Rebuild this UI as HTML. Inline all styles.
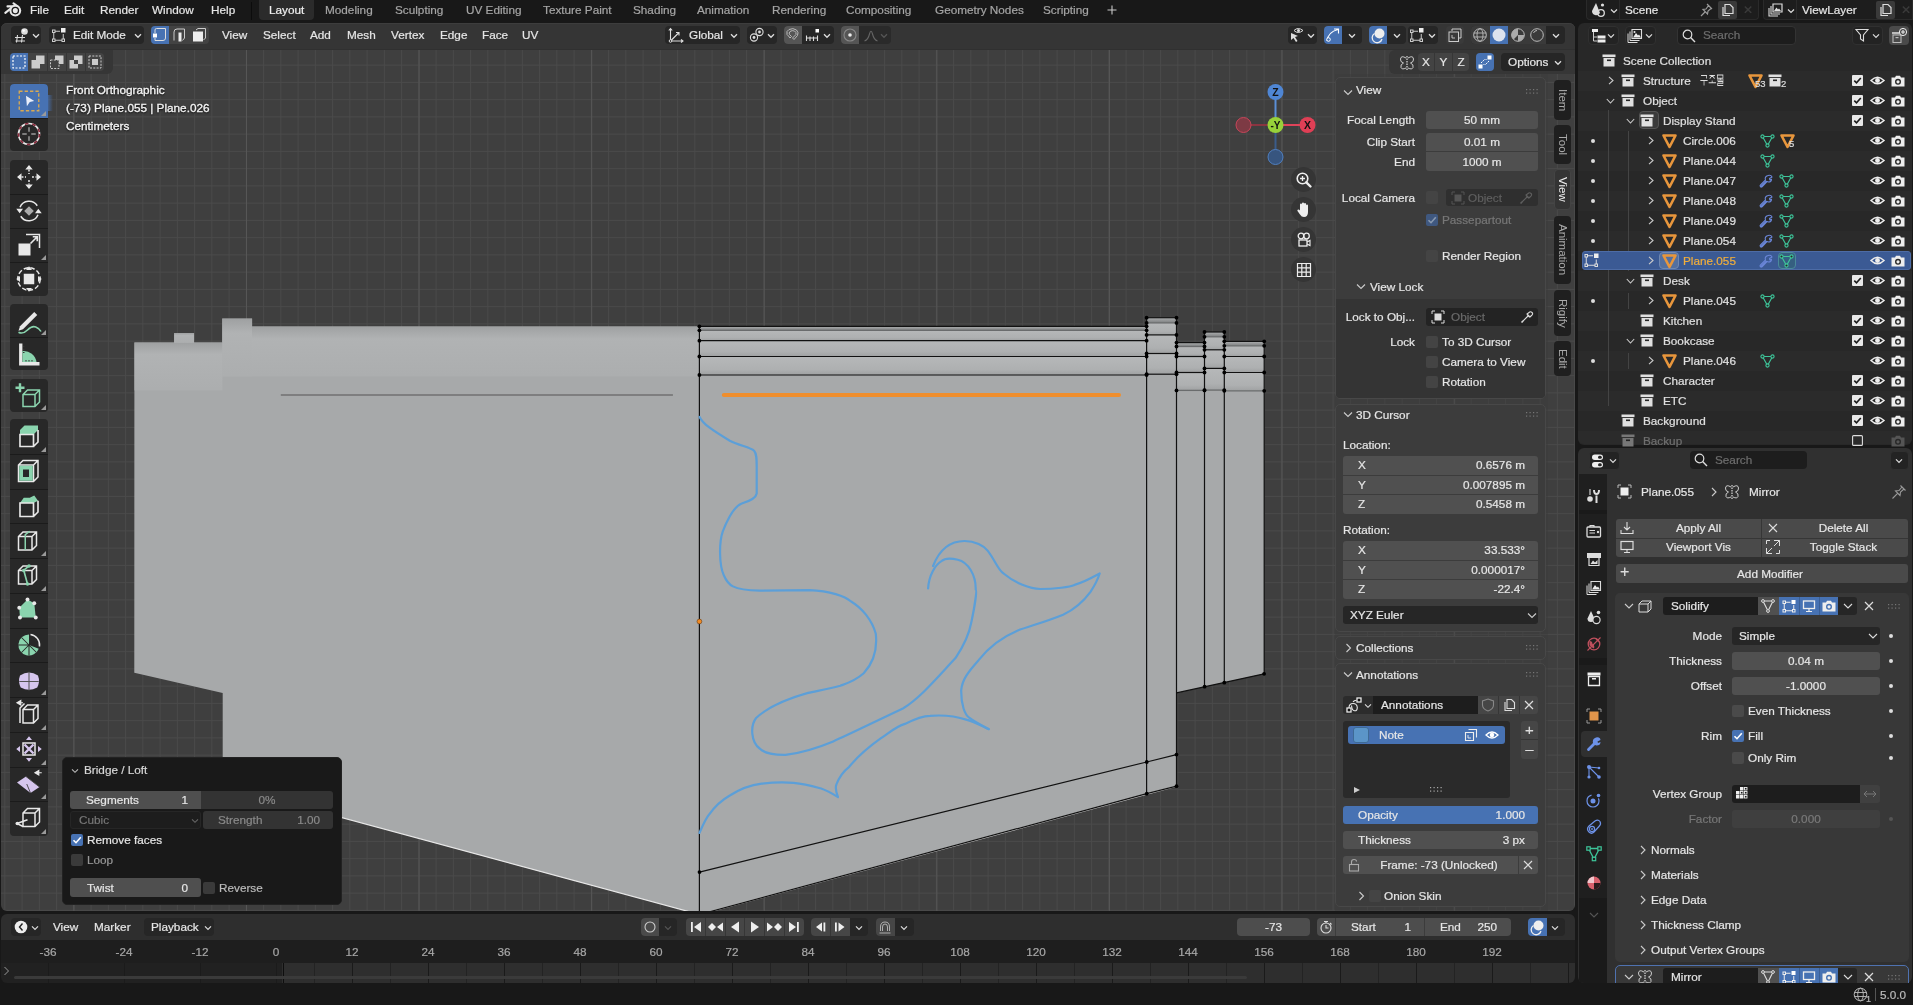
<!DOCTYPE html>
<html><head><meta charset="utf-8">
<style>
*{box-sizing:border-box;margin:0;padding:0}
html,body{width:1913px;height:1005px;overflow:hidden;background:#181818;font-family:"Liberation Sans",sans-serif;font-size:11.75px;color:#e6e6e6}
.a{position:absolute}
.t{position:absolute;white-space:nowrap;line-height:14px;font-size:11.75px;color:#e6e6e6;-webkit-text-stroke:0.2px currentColor;will-change:transform}
.r{text-align:right}
.c{text-align:center}
.dim{color:#8a8a8a}
.num{position:absolute;background:#545454;border-radius:3px}
.tf{position:absolute;background:#1d1d1d;border-radius:3px}
.mn{position:absolute;background:#282828;border-radius:3px}
.chk{position:absolute;width:12px;height:12px;background:#545454;border-radius:2px}
.chk.on{background:#4772b3}
.blue{background:#4772b3}
svg{position:absolute;overflow:visible}
</style></head><body>

<!-- TOP BAR -->
<div class="a" style="left:0;top:0;width:1913px;height:23px;background:#181818"></div>
<svg width="30" height="22" style="left:0;top:0" viewBox="0 0 30 22">
<g stroke="#e8e8e8" stroke-width="2.1" stroke-linecap="round" fill="none"><path d="M5.3 12.9 L11 8.2 M7.5 6.4 L15.5 6.1 M13.5 3.4 L18 6.5"/></g>
<circle cx="15.3" cy="10.6" r="5.9" fill="#e8e8e8"/>
<circle cx="15.3" cy="10.6" r="3.2" fill="none" stroke="#181818" stroke-width="1.3"/>
<circle cx="15.3" cy="10.6" r="1.7" fill="#e8e8e8"/>
</svg>
<div class="t" style="left:30px;top:3px">File</div>
<div class="t" style="left:64px;top:3px">Edit</div>
<div class="t" style="left:100px;top:3px">Render</div>
<div class="t" style="left:152px;top:3px">Window</div>
<div class="t" style="left:211px;top:3px">Help</div>
<div class="a" style="left:251px;top:2px;width:1px;height:18px;background:#0c0c0c"></div>
<div class="a" style="left:259px;top:0;width:55px;height:20px;background:#2b2b2b;border-radius:0 0 4px 4px"></div>
<div class="t" style="left:269px;top:3px;color:#f0f0f0">Layout</div>
<div class="t" style="left:325px;top:3px;color:#a6a6a6">Modeling</div>
<div class="t" style="left:395px;top:3px;color:#a6a6a6">Sculpting</div>
<div class="t" style="left:466px;top:3px;color:#a6a6a6">UV Editing</div>
<div class="t" style="left:543px;top:3px;color:#a6a6a6">Texture Paint</div>
<div class="t" style="left:633px;top:3px;color:#a6a6a6">Shading</div>
<div class="t" style="left:697px;top:3px;color:#a6a6a6">Animation</div>
<div class="t" style="left:772px;top:3px;color:#a6a6a6">Rendering</div>
<div class="t" style="left:846px;top:3px;color:#a6a6a6">Compositing</div>
<div class="t" style="left:935px;top:3px;color:#a6a6a6">Geometry Nodes</div>
<div class="t" style="left:1043px;top:3px;color:#a6a6a6">Scripting</div>
<svg width="12" height="12" viewBox="0 0 12 12" style="left:1105.5px;top:3.5px"><path d="M6 1.5 V10.5 M1.5 6 H10.5" stroke="#c8c8c8" stroke-width="1.1"/></svg>
<!-- scene selector -->
<div class="a" style="left:1586px;top:0;width:173px;height:20px;background:#1d1d1d;border-radius:0 0 4px 4px;border:1px solid #2a2a2a;border-top:none"></div>
<svg width="20" height="16" style="left:1590px;top:2px" viewBox="0 0 20 16">
<path d="M6 1 L10 11 Q8 14 5 13 Q2 12 2 9 Z" fill="#ddd"/><circle cx="12.5" cy="3" r="1.6" fill="#ddd"/><circle cx="11" cy="11" r="3.3" fill="none" stroke="#ddd" stroke-width="1.3"/>
</svg>
<svg width="8" height="6" style="left:1610px;top:8px" viewBox="0 0 8 6"><path d="M1 1.5 L4 4.5 L7 1.5" fill="none" stroke="#ddd" stroke-width="1.2"/></svg>
<div class="a" style="left:1619px;top:0;width:1px;height:19px;background:#2a2a2a"></div>
<div class="t" style="left:1625px;top:3px">Scene</div>
<svg width="16" height="16" style="left:1698px;top:2px" viewBox="0 0 16 16"><path d="M9 2 L14 7 M10.5 3.5 L8 7 L5 7.5 L9.5 12 L10 9 L13 6.5 M7 10 L3 14" fill="none" stroke="#9a9a9a" stroke-width="1.2"/></svg>
<div class="a" style="left:1718px;top:1px;width:19px;height:18px;background:#3a3a3a;border-radius:2px"></div>
<svg width="14" height="14" style="left:1721px;top:3px" viewBox="0 0 14 14"><path d="M4 1.5 H9 L12 4.5 V10.5 H4 Z M2 4 V12.5 H9" fill="none" stroke="#ddd" stroke-width="1.2"/></svg>
<div class="t" style="left:1743px;top:3px;color:#3c3c3c">&#x2715;</div>
<!-- view layer selector -->
<div class="a" style="left:1763px;top:0;width:150px;height:20px;background:#1d1d1d;border-radius:0 0 0 4px;border:1px solid #2a2a2a;border-top:none"></div>
<svg width="16" height="16" style="left:1768px;top:2px" viewBox="0 0 16 16"><path d="M5 2 H14 V10 H5 Z" fill="none" stroke="#ddd" stroke-width="1.2"/><path d="M3 4 V12 H12 M1 6 V14 H10" fill="none" stroke="#ddd" stroke-width="1.1"/><path d="M6 9 L8.5 5.5 L10 7.5 L11 6.5 L13 9 Z" fill="#ddd"/></svg>
<svg width="8" height="6" style="left:1787px;top:8px" viewBox="0 0 8 6"><path d="M1 1.5 L4 4.5 L7 1.5" fill="none" stroke="#ddd" stroke-width="1.2"/></svg>
<div class="a" style="left:1796px;top:0;width:1px;height:19px;background:#2a2a2a"></div>
<div class="t" style="left:1802px;top:3px">ViewLayer</div>
<div class="a" style="left:1876px;top:1px;width:19px;height:18px;background:#3a3a3a;border-radius:2px"></div>
<svg width="14" height="14" style="left:1879px;top:3px" viewBox="0 0 14 14"><path d="M4 1.5 H9 L12 4.5 V10.5 H4 Z M2 4 V12.5 H9" fill="none" stroke="#ddd" stroke-width="1.2"/></svg>
<div class="t" style="left:1901px;top:3px;color:#3c3c3c">&#x2715;</div>

<!-- VIEWPORT AREA -->
<div id="vp" class="a" style="left:1px;top:23px;width:1574px;height:888px;border-radius:6px;overflow:hidden;background-color:#3f3f3f;
background-image:
linear-gradient(to right,#565656 1px,transparent 1px),
linear-gradient(to right,#4a4a4a 1px,transparent 1px),
linear-gradient(to bottom,#4a4a4a 1px,transparent 1px);
background-size:172.6px 100%,17.26px 100%,100% 17.26px;
background-position:72.4px 0,3.36px 0,0 7.16px"></div>



<!-- VIEWPORT HEADER -->
<div class="a" style="left:1px;top:23px;width:1574px;height:27px;background:#353535;border-radius:6px 6px 0 0;border-top:1px solid #3d3d3d;border-bottom:1px solid #303030"></div>
<div class="a" style="left:1px;top:50px;width:112px;height:24px;background:#363636;border-radius:0 0 6px 0"></div>
<div class="a" style="left:1389px;top:50px;width:186px;height:24px;background:#363636;border-radius:6px 0 0 6px"></div>
<!-- editor type -->
<div class="a" style="left:11px;top:26px;width:30px;height:18px;background:#262626;border-radius:4px"></div>
<svg width="16" height="16" style="left:14px;top:27px" viewBox="0 0 16 16"><path d="M1 10.5 H11 M1.5 14 H11 M3.5 8 L2.5 15.5 M8.5 8 L7.5 15.5" stroke="#ddd" stroke-width="1.1" fill="none"/><circle cx="10.5" cy="4.5" r="3.3" fill="#ddd"/><circle cx="9.6" cy="3.6" r="1.2" fill="#fff"/></svg>
<svg width="8" height="6" style="left:32px;top:33px" viewBox="0 0 8 6"><path d="M1 1.3 L4 4.3 L7 1.3" fill="none" stroke="#ddd" stroke-width="1.3"/></svg>
<!-- edit mode -->
<div class="a" style="left:49px;top:26px;width:95px;height:18px;background:#262626;border-radius:4px"></div>
<svg width="16" height="16" style="left:51px;top:27px" viewBox="0 0 16 16"><g fill="none" stroke="#ccc" stroke-width="1"><rect x="1.5" y="3" width="2.5" height="2.5"/><rect x="1.5" y="12" width="2.5" height="2.5"/><rect x="11" y="12" width="2.5" height="2.5"/><path d="M2.75 5.5 V12 M4 13.25 H11 M4 4.25 H9 M12.25 7 V12"/></g><rect x="10" y="1" width="4.5" height="4.5" fill="#eee"/></svg>
<div class="t" style="left:73px;top:28px">Edit Mode</div>
<svg width="8" height="6" style="left:134px;top:33px" viewBox="0 0 8 6"><path d="M1 1.3 L4 4.3 L7 1.3" fill="none" stroke="#ddd" stroke-width="1.3"/></svg>
<!-- select modes -->
<div class="a blue" style="left:151px;top:26px;width:18px;height:18px;border-radius:4px 0 0 4px"></div>
<div class="a" style="left:169px;top:26px;width:20px;height:18px;background:#434343"></div>
<div class="a" style="left:189px;top:26px;width:20px;height:18px;background:#434343;border-radius:0 4px 4px 0"></div>
<svg width="16" height="16" style="left:152px;top:27px" viewBox="0 0 16 16"><path d="M3 6 V3 Q3 1.5 4.5 1.5 H13.5 V11 Q13.5 13.5 11 13.5 H3 V11" fill="none" stroke="#ddd" stroke-width="1"/><rect x="1" y="6.5" width="4" height="4" fill="#fff"/></svg>
<svg width="16" height="16" style="left:171px;top:27px" viewBox="0 0 16 16"><path d="M3 13.5 V5 Q3 2 6 2 H13.5 V11 L11.5 13.5" fill="none" stroke="#ccc" stroke-width="1"/><rect x="7.5" y="5.5" width="3" height="9" fill="#eee"/></svg>
<svg width="16" height="16" style="left:191px;top:27px" viewBox="0 0 16 16"><path d="M5 3 L7 1.5 H14.5 V11 L12.5 13" fill="none" stroke="#ccc" stroke-width="1"/><rect x="2" y="4.5" width="10" height="10" fill="#eee"/></svg>
<div class="t" style="left:222px;top:28px">View</div>
<div class="t" style="left:263px;top:28px">Select</div>
<div class="t" style="left:310px;top:28px">Add</div>
<div class="t" style="left:347px;top:28px">Mesh</div>
<div class="t" style="left:391px;top:28px">Vertex</div>
<div class="t" style="left:440px;top:28px">Edge</div>
<div class="t" style="left:482px;top:28px">Face</div>
<div class="t" style="left:522px;top:28px">UV</div>
<!-- transform orientation -->
<div class="a" style="left:665px;top:26px;width:75px;height:18px;background:#262626;border-radius:4px"></div>
<svg width="16" height="16" style="left:668px;top:27px" viewBox="0 0 16 16"><path d="M2.5 14 V1.5 M0.8 3.5 L2.5 1.5 L4.2 3.5 M2.5 14 H15 M13 12.3 L15 14 L13 15.7 M2.5 14 L11 5.5 M8 5.5 H11 V8.5" fill="none" stroke="#ddd" stroke-width="1.1"/><circle cx="2.5" cy="14" r="1.3" fill="#262626" stroke="#ddd" stroke-width="1"/></svg>
<div class="t" style="left:689px;top:28px">Global</div>
<svg width="8" height="6" style="left:730px;top:33px" viewBox="0 0 8 6"><path d="M1 1.3 L4 4.3 L7 1.3" fill="none" stroke="#ddd" stroke-width="1.3"/></svg>
<!-- pivot -->
<div class="a" style="left:747px;top:26px;width:30px;height:18px;background:#262626;border-radius:4px"></div>
<svg width="16" height="16" style="left:749px;top:27px" viewBox="0 0 16 16"><circle cx="5" cy="10.5" r="3.6" fill="none" stroke="#ddd" stroke-width="1.1"/><circle cx="5" cy="10.5" r="1.4" fill="#ddd"/><circle cx="10.5" cy="5" r="3.6" fill="none" stroke="#ddd" stroke-width="1.1"/><circle cx="10.5" cy="5" r="1.4" fill="#ddd"/></svg>
<svg width="8" height="6" style="left:767px;top:33px" viewBox="0 0 8 6"><path d="M1 1.3 L4 4.3 L7 1.3" fill="none" stroke="#ddd" stroke-width="1.3"/></svg>
<!-- snapping -->
<div class="a" style="left:784px;top:26px;width:50px;height:18px;background:#262626;border-radius:4px"></div>
<div class="a" style="left:784px;top:26px;width:18px;height:18px;background:#555;border-radius:4px 0 0 4px"></div>
<svg width="16" height="16" style="left:785px;top:27px" viewBox="0 0 16 16"><path d="M3.5 9 L2 7.5 Q1 4 4 2.5 Q8 0.5 11.5 3 Q14 5.5 12.5 8.5 L9 12.5 L7.5 11 L11 7.5 Q11.5 5 9.5 4 Q7 3 5 4.5 Q3.5 6 4.5 7.5 L6.5 9.5 L5 11 Z" fill="none" stroke="#bbb" stroke-width="1"/></svg>
<svg width="16" height="16" style="left:805px;top:27px" viewBox="0 0 16 16"><path d="M1 11 H13 M1.5 8.5 V14 M5 9.5 V14 M8.5 9.5 V14 M12.5 8.5 V14" stroke="#ddd" stroke-width="1.1" fill="none"/><rect x="10.5" y="2" width="3.5" height="3.5" fill="#fff"/></svg>
<svg width="8" height="6" style="left:823px;top:33px" viewBox="0 0 8 6"><path d="M1 1.3 L4 4.3 L7 1.3" fill="none" stroke="#ddd" stroke-width="1.3"/></svg>
<!-- proportional -->
<div class="a" style="left:841px;top:26px;width:50px;height:18px;background:#2a2a2a;border-radius:4px"></div>
<div class="a" style="left:841px;top:26px;width:18px;height:18px;background:#555;border-radius:4px 0 0 4px"></div>
<svg width="16" height="16" style="left:842px;top:27px" viewBox="0 0 16 16"><circle cx="8" cy="8" r="6" fill="none" stroke="#888" stroke-width="1.1"/><circle cx="8" cy="8" r="1.8" fill="#eee"/></svg>
<svg width="16" height="16" style="left:863px;top:27px" viewBox="0 0 16 16"><path d="M1.5 14 Q5 13 6.5 7 Q8 1.5 9.5 7 Q11 13 14.5 14" fill="none" stroke="#666" stroke-width="1.1"/></svg>
<svg width="8" height="6" style="left:880px;top:33px" viewBox="0 0 8 6"><path d="M1 1.3 L4 4.3 L7 1.3" fill="none" stroke="#555" stroke-width="1.3"/></svg>
<!-- right side -->
<div class="a" style="left:1288px;top:26px;width:29px;height:18px;background:#262626;border-radius:4px"></div>
<svg width="16" height="16" style="left:1289px;top:27px" viewBox="0 0 16 16"><path d="M2 6 L9 9 L6 10 L8.5 14 L7 15 L4.5 11 L2 13 Z" fill="#ddd"/><path d="M5 3.5 Q9 -0.5 14 3.5 Q9 7.5 5 3.5 Z" fill="none" stroke="#ddd" stroke-width="1"/><circle cx="9.5" cy="3.5" r="1.5" fill="#ddd"/></svg>
<svg width="8" height="6" style="left:1307px;top:33px" viewBox="0 0 8 6"><path d="M1 1.3 L4 4.3 L7 1.3" fill="none" stroke="#ddd" stroke-width="1.3"/></svg>
<div class="a" style="left:1324px;top:26px;width:38px;height:18px;background:#262626;border-radius:4px"></div>
<div class="a blue" style="left:1324px;top:26px;width:18px;height:18px;border-radius:4px 0 0 4px"></div>
<svg width="16" height="16" style="left:1325px;top:27px" viewBox="0 0 16 16"><path d="M2 14 Q3 5 13 2.5 M9 2 H13.5 V6.5" fill="none" stroke="#fff" stroke-width="1.1"/><circle cx="3.5" cy="12.5" r="1.8" fill="#4772b3" stroke="#fff" stroke-width="1"/></svg>
<svg width="8" height="6" style="left:1348px;top:33px" viewBox="0 0 8 6"><path d="M1 1.3 L4 4.3 L7 1.3" fill="none" stroke="#ddd" stroke-width="1.3"/></svg>
<div class="a" style="left:1369px;top:26px;width:37px;height:18px;background:#262626;border-radius:4px"></div>
<div class="a blue" style="left:1369px;top:26px;width:18px;height:18px;border-radius:4px 0 0 4px"></div>
<svg width="16" height="16" style="left:1370px;top:27px" viewBox="0 0 16 16"><circle cx="9.5" cy="6.5" r="5" fill="#eee"/><path d="M4.5 6.5 A5 5 0 1 0 12 12" fill="none" stroke="#eee" stroke-width="1.3"/></svg>
<svg width="8" height="6" style="left:1393px;top:33px" viewBox="0 0 8 6"><path d="M1 1.3 L4 4.3 L7 1.3" fill="none" stroke="#ddd" stroke-width="1.3"/></svg>
<div class="a" style="left:1408px;top:26px;width:30px;height:18px;background:#262626;border-radius:4px"></div>
<svg width="16" height="16" style="left:1409px;top:27px" viewBox="0 0 16 16"><g fill="none" stroke="#ccc" stroke-width="1"><rect x="1.5" y="3" width="2.5" height="2.5"/><rect x="1.5" y="12" width="2.5" height="2.5"/><rect x="11" y="12" width="2.5" height="2.5"/><path d="M2.75 5.5 V12 M4 13.25 H11 M4 4.25 H9 M12.25 7 V12"/></g><rect x="10" y="1" width="4.5" height="4.5" fill="#eee"/></svg>
<svg width="8" height="6" style="left:1428px;top:33px" viewBox="0 0 8 6"><path d="M1 1.3 L4 4.3 L7 1.3" fill="none" stroke="#ddd" stroke-width="1.3"/></svg>
<div class="a" style="left:1446px;top:26px;width:18px;height:18px;background:#3a3a3a;border-radius:4px"></div>
<svg width="16" height="16" style="left:1447px;top:27px" viewBox="0 0 16 16"><path d="M5 4 V2 H14 V11 H12" fill="none" stroke="#ccc" stroke-width="1"/><rect x="2" y="5" width="9.5" height="9.5" fill="none" stroke="#ccc" stroke-width="1"/><path d="M5 8 V11 H8" fill="none" stroke="#ccc" stroke-width="0.9"/></svg>
<div class="a" style="left:1471px;top:26px;width:94px;height:18px;background:#262626;border-radius:4px"></div>
<div class="a" style="left:1471px;top:26px;width:19px;height:18px;background:#3a3a3a;border-radius:4px 0 0 4px"></div>
<div class="a blue" style="left:1490px;top:26px;width:18px;height:18px"></div>
<div class="a" style="left:1508px;top:26px;width:38px;height:18px;background:#3a3a3a"></div>
<svg width="16" height="16" style="left:1472px;top:27px" viewBox="0 0 16 16"><circle cx="8" cy="8" r="6.3" fill="none" stroke="#bbb" stroke-width="1"/><ellipse cx="8" cy="8" rx="3" ry="6.3" fill="none" stroke="#bbb" stroke-width="0.9"/><path d="M1.7 6 H14.3 M1.7 10 H14.3" stroke="#bbb" stroke-width="0.9"/></svg>
<svg width="16" height="16" style="left:1491px;top:27px" viewBox="0 0 16 16"><circle cx="8" cy="8" r="6.5" fill="#dde3ee"/></svg>
<svg width="16" height="16" style="left:1510px;top:27px" viewBox="0 0 16 16"><circle cx="8" cy="8" r="6.3" fill="none" stroke="#bbb" stroke-width="1"/><path d="M8 1.7 A6.3 6.3 0 0 0 3.5 12.5 L8 8 Z" fill="#aaa"/><path d="M8 8 H14.3 A6.3 6.3 0 0 1 8 14.3 Z" fill="#aaa"/></svg>
<svg width="16" height="16" style="left:1529px;top:27px" viewBox="0 0 16 16"><circle cx="8" cy="8" r="6.3" fill="none" stroke="#bbb" stroke-width="1"/><path d="M4.5 6 Q5.5 3.5 8 3.5" fill="none" stroke="#bbb" stroke-width="1"/></svg>
<svg width="8" height="6" style="left:1552px;top:33px" viewBox="0 0 8 6"><path d="M1 1.3 L4 4.3 L7 1.3" fill="none" stroke="#ddd" stroke-width="1.3"/></svg>
<!-- tool header right -->
<svg width="16" height="16" style="left:1399px;top:55px" viewBox="0 0 16 16"><path d="M7 3 Q2 0 1.5 4 Q1 7 4.5 8 Q1 9.5 2 12.5 Q3 15 7 13 M9 3 Q14 0 14.5 4 Q15 7 11.5 8 Q15 9.5 14 12.5 Q13 15 9 13" fill="none" stroke="#ccc" stroke-width="1"/><path d="M8 1 V15" stroke="#fff" stroke-width="1" stroke-dasharray="1.5 1"/></svg>
<div class="a" style="left:1418px;top:53px;width:51px;height:18px;background:#434343;border-radius:4px"></div>
<div class="a" style="left:1434px;top:53px;width:1px;height:18px;background:#363636"></div>
<div class="a" style="left:1452px;top:53px;width:1px;height:18px;background:#363636"></div>
<div class="t c" style="left:1418px;top:55px;width:16px">X</div>
<div class="t c" style="left:1435px;top:55px;width:17px">Y</div>
<div class="t c" style="left:1453px;top:55px;width:16px">Z</div>
<div class="a blue" style="left:1476px;top:53px;width:18px;height:18px;border-radius:4px"></div>
<svg width="16" height="16" style="left:1477px;top:54px" viewBox="0 0 16 16"><rect x="1.5" y="10.5" width="4" height="4" fill="#fff"/><rect x="10.5" y="1.5" width="4" height="4" fill="#fff"/><path d="M4 9 L7.5 5.5 H9.5 M12 7 L8.5 10.5 H6.5" fill="none" stroke="#fff" stroke-width="1" stroke-dasharray="2 1"/></svg>
<div class="a" style="left:1501px;top:53px;width:64px;height:18px;background:#262626;border-radius:4px"></div>
<div class="t" style="left:1508px;top:55px">Options</div>
<svg width="8" height="6" style="left:1554px;top:60px" viewBox="0 0 8 6"><path d="M1 1.3 L4 4.3 L7 1.3" fill="none" stroke="#ddd" stroke-width="1.3"/></svg>
<!-- select box modes -->
<div class="a blue" style="left:10px;top:53px;width:18px;height:18px;border-radius:4px 0 0 4px"></div>
<div class="a" style="left:28px;top:53px;width:76px;height:18px;background:#434343;border-radius:0 4px 4px 0"></div>
<div class="a" style="left:47px;top:53px;width:1px;height:18px;background:#363636"></div>
<div class="a" style="left:66px;top:53px;width:1px;height:18px;background:#363636"></div>
<div class="a" style="left:85px;top:53px;width:1px;height:18px;background:#363636"></div>
<svg width="16" height="16" style="left:11px;top:54px" viewBox="0 0 16 16"><rect x="2" y="2" width="12" height="12" fill="none" stroke="#fff" stroke-width="1.2" stroke-dasharray="2 1.5"/></svg>
<svg width="16" height="16" style="left:30px;top:54px" viewBox="0 0 16 16"><path d="M1.5 6 H6 V1.5 H14.5 V10 H10 V14.5 H1.5 Z" fill="#ccc"/></svg>
<svg width="16" height="16" style="left:49px;top:54px" viewBox="0 0 16 16"><path d="M6 1.5 H14.5 V10 H10 V6 H6 Z" fill="#ccc"/><path d="M1.5 6 H10 V14.5 H1.5 Z" fill="none" stroke="#ccc" stroke-width="1" stroke-dasharray="2 1.3"/></svg>
<svg width="16" height="16" style="left:68px;top:54px" viewBox="0 0 16 16"><path d="M6 1.5 H14.5 V10 H10 V6 H6 Z M1.5 6 H6 V10 H10 V14.5 H1.5 Z" fill="#ccc"/></svg>
<svg width="16" height="16" style="left:87px;top:54px" viewBox="0 0 16 16"><rect x="2" y="2" width="12" height="12" fill="none" stroke="#ccc" stroke-width="1" stroke-dasharray="2 1.3"/><rect x="5" y="5" width="6" height="6" fill="#ccc"/></svg>

<!-- MESH -->
<svg width="1913" height="1005" style="left:0;top:0">
<defs>
<clipPath id="vpc"><rect x="1" y="49" width="1574" height="862"/></clipPath>
<linearGradient id="topband" x1="0" y1="0" x2="0" y2="1">
<stop offset="0" stop-color="#9c9e9f"/><stop offset="0.25" stop-color="#b3b5b6"/><stop offset="1" stop-color="#adafb0"/></linearGradient>
</defs>
<g clip-path="url(#vpc)">
<polygon fill="#a7a9aa" points="134.4,342.4 174.1,342.4 174.1,333 194,333 194,342.4 222.2,342.4 222.2,318.6 252,318.6 252,326.4 1146.4,326.4 1146.4,317.7 1176.4,317.7 1176.4,342.6 1204.4,342.6 1204.4,332 1224.3,332 1224.3,341.3 1264.3,341.3 1264.1,673.8 1176.5,692.9 1176.5,786.2 699.5,914.5 222.7,785.4 222.7,693.1 134.3,672.8"/>
<!-- top light bands -->
<rect x="134.4" y="342.4" width="88" height="48" fill="url(#topband)" opacity="0.8"/>
<rect x="174.1" y="333" width="20" height="10" fill="url(#topband)" opacity="0.8"/>
<rect x="222.2" y="318.6" width="30" height="58" fill="url(#topband)" opacity="0.8"/>
<rect x="252" y="326.4" width="447.5" height="50" fill="url(#topband)" opacity="0.8"/>
<linearGradient id="bandg" x1="0" y1="0" x2="0" y2="1"><stop offset="0" stop-color="#b6b8b9"/><stop offset="0.7" stop-color="#aeb0b1"/><stop offset="1" stop-color="#9fa1a2"/></linearGradient>
<linearGradient id="bevg" x1="0" y1="0" x2="0" y2="1"><stop offset="0" stop-color="#aeb0b1"/><stop offset="1" stop-color="#7d7f80"/></linearGradient>
<line x1="280.8" y1="395" x2="672.9" y2="395" stroke="#707070" stroke-width="1.6"/>
<rect x="699.4" y="326.3" width="447.2" height="4.0" fill="url(#bevg)"/><rect x="699.4" y="330.3" width="447.2" height="10.4" fill="url(#bandg)"/><rect x="699.4" y="340.7" width="447.2" height="15.8" fill="url(#bandg)"/><rect x="699.4" y="356.5" width="447.2" height="18.5" fill="url(#bandg)"/>
<rect x="1146.6" y="317.7" width="29.9" height="5.2" fill="url(#bevg)"/><rect x="1146.6" y="322.9" width="29.9" height="12.0" fill="url(#bandg)"/><rect x="1146.6" y="334.9" width="29.9" height="18.6" fill="url(#bandg)"/><rect x="1146.6" y="353.5" width="29.9" height="20.7" fill="url(#bandg)"/>
<rect x="1176.5" y="342.6" width="28.0" height="3.9" fill="url(#bevg)"/><rect x="1176.5" y="346.5" width="28.0" height="10.0" fill="url(#bandg)"/><rect x="1176.5" y="356.5" width="28.0" height="16.0" fill="url(#bandg)"/><rect x="1176.5" y="372.5" width="28.0" height="17.9" fill="url(#bandg)"/>
<rect x="1204.5" y="332" width="19.8" height="4.8" fill="url(#bevg)"/><rect x="1204.5" y="336.8" width="19.8" height="13.0" fill="url(#bandg)"/><rect x="1204.5" y="349.8" width="19.8" height="18.6" fill="url(#bandg)"/><rect x="1204.5" y="368.4" width="19.8" height="21.7" fill="url(#bandg)"/>
<rect x="1224.3" y="341.3" width="39.9" height="4.5" fill="url(#bevg)"/><rect x="1224.3" y="345.8" width="39.9" height="10.7" fill="url(#bandg)"/><rect x="1224.3" y="356.5" width="39.9" height="16.0" fill="url(#bandg)"/><rect x="1224.3" y="372.5" width="39.9" height="18.3" fill="url(#bandg)"/>
<line x1="723.8" y1="395" x2="1119" y2="395" stroke="#ef8e2d" stroke-width="4" stroke-linecap="round"/>
<!-- white highlight edges on bottom -->
<line x1="222.7" y1="785.4" x2="699.5" y2="914.5" stroke="#e8e8e8" stroke-width="1.2"/>
<line x1="699.5" y1="914.5" x2="1176.5" y2="786.2" stroke="#d8d8d8" stroke-width="1.2"/>
<!-- edges -->
<g fill="none">
<path d="M699.4 326.3H1146.6" stroke="#111" stroke-width="1.2"/><path d="M699.4 330.3H1146.6" stroke="#6a6c6d" stroke-width="1.3"/><path d="M699.4 340.7H1146.6" stroke="#111" stroke-width="1.2"/><path d="M699.4 356.5H1146.6" stroke="#111" stroke-width="1.2"/><path d="M699.4 375H1146.6" stroke="#111" stroke-width="1.2"/>
<path d="M1146.6 317.7H1176.5" stroke="#111" stroke-width="1.2"/><path d="M1146.6 322.9H1176.5" stroke="#6a6c6d" stroke-width="1.3"/><path d="M1146.6 334.9H1176.5" stroke="#111" stroke-width="1.2"/><path d="M1146.6 353.5H1176.5" stroke="#111" stroke-width="1.2"/><path d="M1146.6 374.2H1176.5" stroke="#111" stroke-width="1.2"/>
<path d="M1176.5 342.6H1204.5" stroke="#111" stroke-width="1.2"/><path d="M1176.5 346.5H1204.5" stroke="#6a6c6d" stroke-width="1.3"/><path d="M1176.5 356.5H1204.5" stroke="#111" stroke-width="1.2"/><path d="M1176.5 372.5H1204.5" stroke="#111" stroke-width="1.2"/><path d="M1176.5 390.4H1204.5" stroke="#6a6c6d" stroke-width="1.3"/>
<path d="M1204.5 332H1224.3" stroke="#111" stroke-width="1.2"/><path d="M1204.5 336.8H1224.3" stroke="#6a6c6d" stroke-width="1.3"/><path d="M1204.5 349.8H1224.3" stroke="#111" stroke-width="1.2"/><path d="M1204.5 368.4H1224.3" stroke="#111" stroke-width="1.2"/><path d="M1204.5 390.1H1224.3" stroke="#6a6c6d" stroke-width="1.3"/>
<path d="M1224.3 341.3H1264.2" stroke="#111" stroke-width="1.2"/><path d="M1224.3 345.8H1264.2" stroke="#6a6c6d" stroke-width="1.3"/><path d="M1224.3 356.5H1264.2" stroke="#111" stroke-width="1.2"/><path d="M1224.3 372.5H1264.2" stroke="#111" stroke-width="1.2"/><path d="M1224.3 390.8H1264.2" stroke="#6a6c6d" stroke-width="1.3"/>
<g stroke="#111" stroke-width="1.2">
<path d="M699.4 326.1V915 M1146.6 317.7V793.7 M1176.5 317.7V786.2 M1204.5 332V686.7 M1224.3 332V682.7 M1264.2 341.3V673.8"/>
<path d="M699.5 872.1L1146.75 762L1176.5 754.6 M699.5 914.5L1146.75 793.7L1176.5 786.2 M1176.5 692.9L1264.1 673.8"/>
</g></g>
<g fill="#000">
<circle cx="699.4" cy="326.3" r="1.9"/><circle cx="699.4" cy="330.3" r="1.9"/><circle cx="699.4" cy="340.7" r="1.9"/><circle cx="699.4" cy="356.5" r="1.9"/><circle cx="699.4" cy="375" r="1.9"/><circle cx="699.5" cy="872.1" r="1.9"/><circle cx="1146.6" cy="317.7" r="1.9"/><circle cx="1146.6" cy="322.9" r="1.9"/><circle cx="1146.6" cy="326.3" r="1.9"/><circle cx="1146.6" cy="330.3" r="1.9"/><circle cx="1146.6" cy="334.9" r="1.9"/><circle cx="1146.6" cy="340.7" r="1.9"/><circle cx="1146.6" cy="353.5" r="1.9"/><circle cx="1146.6" cy="356.5" r="1.9"/><circle cx="1146.6" cy="374.2" r="1.9"/><circle cx="1146.6" cy="375" r="1.9"/><circle cx="1146.75" cy="762" r="1.9"/><circle cx="1146.75" cy="793.7" r="1.9"/><circle cx="1176.5" cy="317.7" r="1.9"/><circle cx="1176.5" cy="322.9" r="1.9"/><circle cx="1176.5" cy="334.9" r="1.9"/><circle cx="1176.5" cy="342.6" r="1.9"/><circle cx="1176.5" cy="346.5" r="1.9"/><circle cx="1176.5" cy="353.5" r="1.9"/><circle cx="1176.5" cy="356.5" r="1.9"/><circle cx="1176.5" cy="372.5" r="1.9"/><circle cx="1176.5" cy="374.2" r="1.9"/><circle cx="1176.5" cy="390.4" r="1.9"/><circle cx="1176.5" cy="754.6" r="1.9"/><circle cx="1176.5" cy="786.2" r="1.9"/><circle cx="1204.5" cy="332" r="1.9"/><circle cx="1204.5" cy="336.8" r="1.9"/><circle cx="1204.5" cy="342.6" r="1.9"/><circle cx="1204.5" cy="346.5" r="1.9"/><circle cx="1204.5" cy="349.8" r="1.9"/><circle cx="1204.5" cy="356.5" r="1.9"/><circle cx="1204.5" cy="368.4" r="1.9"/><circle cx="1204.5" cy="372.5" r="1.9"/><circle cx="1204.5" cy="390.1" r="1.9"/><circle cx="1204.5" cy="390.4" r="1.9"/><circle cx="1204.6" cy="686.7" r="1.9"/><circle cx="1224.3" cy="332" r="1.9"/><circle cx="1224.3" cy="336.8" r="1.9"/><circle cx="1224.3" cy="341.3" r="1.9"/><circle cx="1224.3" cy="345.8" r="1.9"/><circle cx="1224.3" cy="349.8" r="1.9"/><circle cx="1224.3" cy="356.5" r="1.9"/><circle cx="1224.3" cy="368.4" r="1.9"/><circle cx="1224.3" cy="372.5" r="1.9"/><circle cx="1224.3" cy="390.1" r="1.9"/><circle cx="1224.3" cy="390.8" r="1.9"/><circle cx="1224.3" cy="682.7" r="1.9"/><circle cx="1264.1" cy="673.8" r="1.9"/><circle cx="1264.2" cy="341.3" r="1.9"/><circle cx="1264.2" cy="345.8" r="1.9"/><circle cx="1264.2" cy="356.5" r="1.9"/><circle cx="1264.2" cy="372.5" r="1.9"/><circle cx="1264.2" cy="390.8" r="1.9"/>
</g>
<circle cx="699.4" cy="621.5" r="2.4" fill="#f08a24" stroke="#6a3a10" stroke-width="0.6"/>
<!-- annotation strokes -->
<g stroke="#5c9fd8" stroke-width="2.2" fill="none" stroke-linecap="round" stroke-linejoin="round">
<path d="M699.6 416.9 C703 424 712 430 729.8 440.8 C740 446 750 447 754.1 450.8 C757 454 756.7 460 756.7 470 L756.7 493.5 C756 498 750 501 741.8 503.5 C735 506 728 518 722.8 531.4 C719 542 719 565 723.8 575.2 C728 585 732 590 759.7 590.7 L809.4 590.1 C830 591 845 596 851.1 601.5 C862 608 872 620 875.8 633.8 C877 645 876 660 863.7 673.2 C855 681 845 684 840.4 685.7 C825 690 815 691 808.1 692.9 C790 698 770 705 756.1 718 C750 726 751 742 759.7 748.5 C765 754 775 755 785.5 754.9 C800 753 815 749 833.2 741.4 C850 734 870 724 902.9 708.5 C920 698 935 680 955.5 658.1 C965 644 970 630 971.5 621.5 C975 605 977 590 975.7 589.5 C976 575 968 562 957.8 559.7 C950 558 945 558 941.8 560.9 C935 565 929 575 928.1 588.4"/>
<path d="M933.1 566 C940 548 952 541 964.7 541 C975 541 984 546 987.6 550.6 C995 560 998 570 1003.6 573.5 C1015 583 1030 589 1040.2 589 C1055 589 1070 587 1074.5 584.9 C1085 582 1095 576 1099.7 573.5 C1097 582 1093 588 1090.5 591.8 C1083 602 1073 610 1063.1 614.7 C1045 622 1030 626 1017.3 630.7 C1000 638 988 648 978.4 660.4 C968 672 962 680 961.2 690.2 C961 705 965 715 969.2 717.6 C975 722 983 726 988.7 729.1"/>
<path d="M699.5 832.9 C703 825 706 818 709.1 814.6 C715 806 722 800 729.8 795.5 C740 789 750 785 761.6 783.6 C775 782 785 782 793.5 782.8 C805 784 812 786 820.5 788.3 C828 791 833 794 838 797.1 C836 792 835 788 836.4 784.4 C840 775 845 770 849.2 766.8 C858 756 870 746 881 738.2 C890 732 897 726 904.9 723.9 C915 719 925 716 930 715.9 C940 715 955 716 967 719.9 C975 722 982 726 988.7 729.1"/>
</g>
</g>
</svg>


<!-- VIEWPORT TEXT OVERLAY -->
<div class="t" style="left:66px;top:83px;color:#f4f4f4;-webkit-text-stroke:0.35px #f4f4f4;text-shadow:0 1px 2px #000,0 0 1px #000">Front Orthographic</div>
<div class="t" style="left:66px;top:101px;color:#f4f4f4;-webkit-text-stroke:0.35px #f4f4f4;text-shadow:0 1px 2px #000,0 0 1px #000">(-73) Plane.055 | Plane.026</div>
<div class="t" style="left:66px;top:119px;color:#f4f4f4;-webkit-text-stroke:0.35px #f4f4f4;text-shadow:0 1px 2px #000,0 0 1px #000">Centimeters</div>

<!-- TOOLBAR -->
<div class="a" style="left:46px;top:95px;width:7px;height:16px;background:linear-gradient(to right,#4772b3,rgba(71,114,179,0))"></div>
<div class="a" style="left:10px;top:84px;width:38px;height:67px;background:#282828;border-radius:4px;overflow:hidden"><div class="a blue" style="left:0;top:0;width:38px;height:33.5px"></div><svg width="30" height="30" style="left:4px;top:1.8px" viewBox="0 0 20 20"><rect x="3.5" y="3.5" width="13" height="13" fill="none" stroke="#d9aa52" stroke-width="0.9" stroke-dasharray="2.2 1.4"/><path d="M8 6.5 L13.5 10 L10.5 10.6 L8.6 13.5 Z" fill="#e8eefa"/></svg><svg width="5" height="5" style="left:31px;top:26.5px" viewBox="0 0 5 5"><path d="M5 0 V5 H0 Z" fill="#9a9a9a"/></svg><div class="a" style="left:0;top:33.5px;width:38px;height:1px;background:#1b1b1b"></div><svg width="30" height="30" style="left:4px;top:35.2px" viewBox="0 0 20 20"><circle cx="10" cy="10" r="7" fill="none" stroke="#e8e8e8" stroke-width="1.1"/><circle cx="10" cy="10" r="7" fill="none" stroke="#8a2a3c" stroke-width="1.1" stroke-dasharray="2.4 2.6"/><path d="M10 5.5 V8.5 M10 11.5 V14.5 M5.5 10 H8.5 M11.5 10 H14.5" stroke="#999" stroke-width="1"/></svg></div>
<div class="a" style="left:10px;top:160px;width:38px;height:136px;background:#282828;border-radius:4px;overflow:hidden"><svg width="30" height="30" style="left:4px;top:2.0px" viewBox="0 0 20 20"><path d="M10 2 L12.5 5 H7.5 Z M10 18 L12.5 15 H7.5 Z M2 10 L5 7.5 V12.5 Z M18 10 L15 7.5 V12.5 Z" fill="#e8e8e8"/><path d="M10 5 V8 M10 12 V15 M5 10 H8 M12 10 H15" stroke="#e8e8e8" stroke-width="1" stroke-dasharray="1.3 1"/></svg><div class="a" style="left:0;top:34.0px;width:38px;height:1px;background:#1b1b1b"></div><svg width="30" height="30" style="left:4px;top:36.0px" viewBox="0 0 20 20"><path d="M4 7.5 A6.5 6.5 0 0 1 15.5 6.5 M16 12.5 A6.5 6.5 0 0 1 4.5 13.5" fill="none" stroke="#e8e8e8" stroke-width="1"/><path d="M1.5 8.5 H6 L3.8 11.5 Z M18.5 11.5 H14 L16.2 8.5 Z" fill="#e8e8e8"/><path d="M10 6.8 L13.2 10 L10 13.2 L6.8 10 Z" fill="#aaa"/></svg><div class="a" style="left:0;top:68.0px;width:38px;height:1px;background:#1b1b1b"></div><svg width="30" height="30" style="left:4px;top:70.0px" viewBox="0 0 20 20"><path d="M8 3 H17 V12" fill="none" stroke="#e8e8e8" stroke-width="1"/><rect x="3" y="9" width="8" height="8" fill="#e8e8e8"/><path d="M11 9 L15.5 4.5 M12.5 4.5 H15.5 V7.5" fill="none" stroke="#e8e8e8" stroke-width="1.1"/></svg><svg width="5" height="5" style="left:31px;top:95.0px" viewBox="0 0 5 5"><path d="M5 0 V5 H0 Z" fill="#9a9a9a"/></svg><div class="a" style="left:0;top:102.0px;width:38px;height:1px;background:#1b1b1b"></div><svg width="30" height="30" style="left:4px;top:104.0px" viewBox="0 0 20 20"><circle cx="10" cy="10" r="7.5" fill="none" stroke="#e8e8e8" stroke-width="1" stroke-dasharray="3 1.5"/><rect x="6.5" y="6.5" width="7" height="7" fill="#e8e8e8"/><path d="M10 1.5 L12 4 H8 Z M10 18.5 L12 16 H8 Z M1.5 10 L4 8 V12 Z M18.5 10 L16 8 V12 Z" fill="#e8e8e8"/></svg></div>
<div class="a" style="left:10px;top:304px;width:38px;height:66px;background:#282828;border-radius:4px;overflow:hidden"><svg width="30" height="30" style="left:4px;top:1.5px" viewBox="0 0 20 20"><path d="M4 13.5 L13.5 4 L15.5 6 L6 15.5 L3 16.5 Z" fill="#e8e8e8"/><path d="M3 17.5 Q6 19 9 16 Q12 13 14.5 14 Q17 15 18 17" fill="none" stroke="#8ad4ae" stroke-width="1.1"/></svg><svg width="5" height="5" style="left:31px;top:26.0px" viewBox="0 0 5 5"><path d="M5 0 V5 H0 Z" fill="#9a9a9a"/></svg><div class="a" style="left:0;top:33.0px;width:38px;height:1px;background:#1b1b1b"></div><svg width="30" height="30" style="left:4px;top:34.5px" viewBox="0 0 20 20"><path d="M4.5 3 V16.5 H17" fill="none" stroke="#e8e8e8" stroke-width="2.2"/><path d="M5.6 8 A8.5 8.5 0 0 1 15 15.4 H5.6 Z" fill="#8ad4ae"/><path d="M7 5 H6 M7 7 H6 M7 9 H6 M8 15 V14 M10 15 V14 M12 15 V14" stroke="#333" stroke-width="0.7"/></svg></div>
<div class="a" style="left:10px;top:379px;width:38px;height:33px;background:#282828;border-radius:4px;overflow:hidden"><svg width="30" height="30" style="left:4px;top:1.5px" viewBox="0 0 20 20"><path d="M6 9 L9 6 H17 V14 L14 17 H6 Z M6 9 H14 V17 M14 9 L17 6" fill="none" stroke="#8ad4ae" stroke-width="1"/><path d="M4 1.5 V7.5 M1 4.5 H7" stroke="#8ad4ae" stroke-width="1.6"/></svg><svg width="5" height="5" style="left:31px;top:26.0px" viewBox="0 0 5 5"><path d="M5 0 V5 H0 Z" fill="#9a9a9a"/></svg></div>
<div class="a" style="left:10px;top:419px;width:38px;height:417px;background:#282828;border-radius:4px;overflow:hidden"><svg width="30" height="30" style="left:4px;top:2.4px" viewBox="0 0 20 20"><path d="M4 6 L7 3 H16 V6 L13 9 H4 Z" fill="#8ad4ae"/><path d="M4 9 H13 V17 H4 Z M13 17 L16 14 V6" fill="none" stroke="#e8e8e8" stroke-width="1.1"/></svg><svg width="5" height="5" style="left:31px;top:27.8px" viewBox="0 0 5 5"><path d="M5 0 V5 H0 Z" fill="#9a9a9a"/></svg><div class="a" style="left:0;top:34.8px;width:38px;height:1px;background:#1b1b1b"></div><svg width="30" height="30" style="left:4px;top:37.1px" viewBox="0 0 20 20"><path d="M3 6 L6 3 H16 V14 L13 17 H3 Z M3 6 H13 V17 M13 6 L16 3" fill="none" stroke="#e8e8e8" stroke-width="1"/><path d="M3.5 6.5 H12.5 V16.5 H3.5 Z M6 9 V14 H10 V9 Z" fill="#8ad4ae" fill-rule="evenodd"/></svg><div class="a" style="left:0;top:69.5px;width:38px;height:1px;background:#1b1b1b"></div><svg width="30" height="30" style="left:4px;top:71.9px" viewBox="0 0 20 20"><path d="M4 8 L6.5 4.5 H10.5 L13 8 Z M13 8 L10.5 4.5 L13.5 3 L16 6.5 Z" fill="#8ad4ae"/><path d="M4 8 H13 V17 H4 Z M13 17 L16 14 V6.5" fill="none" stroke="#e8e8e8" stroke-width="1.1"/></svg><div class="a" style="left:0;top:104.2px;width:38px;height:1px;background:#1b1b1b"></div><svg width="30" height="30" style="left:4px;top:106.6px" viewBox="0 0 20 20"><path d="M3 7 L6 4 H15 V13 L12 16 H3 Z M3 7 H12 V16 M12 7 L15 4" fill="none" stroke="#e8e8e8" stroke-width="1"/><path d="M7.5 16 V5.8 L10.5 3.5" fill="none" stroke="#8ad4ae" stroke-width="1"/></svg><svg width="5" height="5" style="left:31px;top:132.0px" viewBox="0 0 5 5"><path d="M5 0 V5 H0 Z" fill="#9a9a9a"/></svg><div class="a" style="left:0;top:139.0px;width:38px;height:1px;background:#1b1b1b"></div><svg width="30" height="30" style="left:4px;top:141.4px" viewBox="0 0 20 20"><path d="M3 7 L6 4 H15 V13 L12 16 H3 Z M3 7 H12 V16 M12 7 L15 4" fill="none" stroke="#e8e8e8" stroke-width="1"/><path d="M10 4 L6.5 6.8 L9 16" fill="none" stroke="#8ad4ae" stroke-width="1.1"/><circle cx="10" cy="4" r="1.2" fill="#8ad4ae"/><circle cx="6.5" cy="7" r="1.2" fill="#8ad4ae"/><circle cx="9" cy="16" r="1.2" fill="#8ad4ae"/></svg><svg width="5" height="5" style="left:31px;top:166.8px" viewBox="0 0 5 5"><path d="M5 0 V5 H0 Z" fill="#9a9a9a"/></svg><div class="a" style="left:0;top:173.8px;width:38px;height:1px;background:#1b1b1b"></div><svg width="30" height="30" style="left:4px;top:176.1px" viewBox="0 0 20 20"><path d="M9 3 L13.5 5.5 L14.5 15 H4 L3.5 8.5 Z" fill="#8ad4ae"/><g fill="#e8e8e8"><circle cx="9" cy="3" r="1.3"/><circle cx="13.5" cy="5.5" r="1.3"/><circle cx="14.5" cy="15" r="1.3"/><circle cx="4" cy="15" r="1.3"/><circle cx="3.5" cy="8.5" r="1.3"/></g></svg><div class="a" style="left:0;top:208.5px;width:38px;height:1px;background:#1b1b1b"></div><svg width="30" height="30" style="left:4px;top:210.9px" viewBox="0 0 20 20"><path d="M10 10 L10 3 A7 7 0 1 0 16.5 12.5 Z" fill="#8ad4ae"/><path d="M10 10 L3 10 M10 10 L5 15 M10 10 L10 17 M10 10 L15 15 M10 10 L5 5" stroke="#2a2a2a" stroke-width="0.7"/><path d="M11 3 A7 7 0 0 1 17 11" fill="none" stroke="#e8e8e8" stroke-width="1"/></svg><div class="a" style="left:0;top:243.2px;width:38px;height:1px;background:#1b1b1b"></div><svg width="30" height="30" style="left:4px;top:245.6px" viewBox="0 0 20 20"><path d="M4 7 Q10 3 16 7 Q17.5 11 15.5 15 Q10 18 4.5 15 Q2.5 11 4 7 Z" fill="#d6c6ee"/><path d="M3.5 11 H16.5 M10 4.5 V17" stroke="#555" stroke-width="0.7"/></svg><svg width="5" height="5" style="left:31px;top:271.0px" viewBox="0 0 5 5"><path d="M5 0 V5 H0 Z" fill="#9a9a9a"/></svg><div class="a" style="left:0;top:278.0px;width:38px;height:1px;background:#1b1b1b"></div><svg width="30" height="30" style="left:4px;top:280.4px" viewBox="0 0 20 20"><path d="M6 7 L9 4 H16 V13 L13 16 H6 Z M6 7 H13 V16 M13 7 L16 4 M4 16 V6 L7 3" fill="none" stroke="#e8e8e8" stroke-width="1"/><path d="M2 2.5 L4.5 1 V4 Z M3.5 2.5 H6" fill="#e8e8e8" stroke="#e8e8e8" stroke-width="0.8"/></svg><svg width="5" height="5" style="left:31px;top:305.8px" viewBox="0 0 5 5"><path d="M5 0 V5 H0 Z" fill="#9a9a9a"/></svg><div class="a" style="left:0;top:312.8px;width:38px;height:1px;background:#1b1b1b"></div><svg width="30" height="30" style="left:4px;top:315.1px" viewBox="0 0 20 20"><rect x="6" y="6" width="8" height="8" fill="none" stroke="#e8e8e8" stroke-width="1"/><path d="M7 7 L13 13 M13 7 L7 13" stroke="#d6c6ee" stroke-width="1.6"/><path d="M10 1.5 L12 4 H8 Z M10 18.5 L12 16 H8 Z M1.5 10 L4 8 V12 Z M18.5 10 L16 8 V12 Z" fill="#d6c6ee"/></svg><svg width="5" height="5" style="left:31px;top:340.5px" viewBox="0 0 5 5"><path d="M5 0 V5 H0 Z" fill="#9a9a9a"/></svg><div class="a" style="left:0;top:347.5px;width:38px;height:1px;background:#1b1b1b"></div><svg width="30" height="30" style="left:4px;top:349.9px" viewBox="0 0 20 20"><path d="M2 9 L8 5 L17 12 L11 16 Z" fill="#d6c6ee"/><path d="M8 5 L17 12 M11 16 L8.5 10" stroke="#444" stroke-width="0.6"/><path d="M14 2.5 L16.5 1 V4 Z M16 2.5 H18.5" fill="#e8e8e8" stroke="#e8e8e8" stroke-width="0.8"/></svg><svg width="5" height="5" style="left:31px;top:375.2px" viewBox="0 0 5 5"><path d="M5 0 V5 H0 Z" fill="#9a9a9a"/></svg><div class="a" style="left:0;top:382.2px;width:38px;height:1px;background:#1b1b1b"></div><svg width="30" height="30" style="left:4px;top:384.6px" viewBox="0 0 20 20"><path d="M6 6 L9 3 H17 V12 L14 15 H6 Z M6 6 H14 V15 M14 6 L17 3" fill="none" stroke="#e8e8e8" stroke-width="1"/><path d="M2 13 L6 15 M2 13 L9 10.5" stroke="#e8e8e8" stroke-width="1"/><circle cx="2.2" cy="13" r="1.2" fill="#e8e8e8"/></svg><svg width="5" height="5" style="left:31px;top:410.0px" viewBox="0 0 5 5"><path d="M5 0 V5 H0 Z" fill="#9a9a9a"/></svg></div>

<!-- BRIDGE LOFT PANEL -->
<div class="a" style="left:62px;top:757px;width:280px;height:148px;background:#191919;border-radius:5px;border:1px solid #222"></div>
<svg width="8" height="6" style="left:71px;top:768px" viewBox="0 0 8 6"><path d="M1 1.3 L4 4.3 L7 1.3" fill="none" stroke="#bbb" stroke-width="1.1"/></svg>
<div class="t" style="left:84px;top:763px;color:#d8d8d8">Bridge / Loft</div>
<div class="num" style="left:70px;top:791px;width:131px;height:18px;background:#4f4f4f;border-radius:3px 0 0 3px"></div>
<div class="num" style="left:201px;top:791px;width:132px;height:18px;background:#333;border-radius:0 3px 3px 0"></div>
<div class="t" style="left:86px;top:793px">Segments</div>
<div class="t r" style="left:0;width:188px;top:793px">1</div>
<div class="t c dim" style="left:201px;width:132px;top:793px">0%</div>
<div class="a" style="left:70px;top:811px;width:131px;height:18px;background:#1d1d1d;border-radius:3px;border:1px solid #262626"></div>
<div class="t" style="left:79px;top:813px;color:#777">Cubic</div>
<svg width="8" height="6" style="left:191px;top:818px" viewBox="0 0 8 6"><path d="M1 1.3 L4 4.3 L7 1.3" fill="none" stroke="#666" stroke-width="1.1"/></svg>
<div class="num" style="left:203px;top:811px;width:130px;height:18px;background:#333"></div>
<div class="t dim" style="left:218px;top:813px">Strength</div>
<div class="t r dim" style="left:0;width:320px;top:813px">1.00</div>
<div class="chk on" style="left:71px;top:834px"><svg width="12" height="12" style="left:0;top:0" viewBox="0 0 12 12"><path d="M2.5 6.2 L5 8.7 L9.8 3.3" fill="none" stroke="#fff" stroke-width="1.6"/></svg></div>
<div class="t" style="left:87px;top:833px">Remove faces</div>
<div class="chk" style="left:71px;top:854px;background:#3a3a3a"></div>
<div class="t" style="left:87px;top:853px;color:#999">Loop</div>
<div class="num" style="left:70px;top:878px;width:131px;height:19px;background:#4f4f4f"></div>
<div class="t" style="left:87px;top:881px">Twist</div>
<div class="t r" style="left:0;width:188px;top:881px">0</div>
<div class="chk" style="left:203px;top:882px;background:#3a3a3a"></div>
<div class="t" style="left:219px;top:881px;color:#bbb">Reverse</div>

<!-- NAV GIZMO -->
<svg width="100" height="100" style="left:1225px;top:75px" viewBox="1225 75 100 100">
<line x1="1275.5" y1="125" x2="1275.5" y2="92" stroke="#5b8fd6" stroke-width="2"/>
<line x1="1275.5" y1="125" x2="1307" y2="125" stroke="#e0445a" stroke-width="2"/>
<line x1="1275.5" y1="125" x2="1243" y2="125" stroke="#8a3440" stroke-width="2"/>
<line x1="1275.5" y1="125" x2="1275.5" y2="157" stroke="#3b5c8a" stroke-width="2"/>
<circle cx="1243.5" cy="125" r="7.5" fill="#7d3a44" stroke="#c8465a" stroke-width="1"/>
<circle cx="1275.5" cy="157" r="7.5" fill="#37557f" stroke="#4f7fc0" stroke-width="1"/>
<circle cx="1275.5" cy="92" r="8" fill="#4f86d4"/>
<circle cx="1307.5" cy="125" r="8" fill="#df3f55"/>
<circle cx="1275.5" cy="125" r="8" fill="#97d13a"/>
<text x="1275.5" y="96" font-family="Liberation Sans" font-size="10.5" font-weight="bold" fill="#111" text-anchor="middle">Z</text>
<text x="1307.5" y="129" font-family="Liberation Sans" font-size="10.5" font-weight="bold" fill="#111" text-anchor="middle">X</text>
<text x="1275.5" y="129" font-family="Liberation Sans" font-size="10" font-weight="bold" fill="#111" text-anchor="middle">-Y</text>
</svg>
<!-- NAV BUTTONS -->
<div class="a" style="left:1291px;top:167px;width:25px;height:25px;border-radius:50%;background:#353535"></div>
<div class="a" style="left:1291px;top:197px;width:25px;height:25px;border-radius:50%;background:#353535"></div>
<div class="a" style="left:1291px;top:227px;width:25px;height:25px;border-radius:50%;background:#353535"></div>
<div class="a" style="left:1291px;top:257px;width:25px;height:25px;border-radius:50%;background:#353535"></div>
<svg width="18" height="18" style="left:1294.5px;top:170.5px" viewBox="0 0 18 18"><circle cx="7.5" cy="7.5" r="5.3" fill="none" stroke="#eee" stroke-width="1.6"/><path d="M11.3 11.3 L15.5 15.5" stroke="#eee" stroke-width="2.4" stroke-linecap="round"/><path d="M7.5 5 V10 M5 7.5 H10" stroke="#eee" stroke-width="1.3"/></svg>
<svg width="18" height="18" style="left:1294.5px;top:200.5px" viewBox="0 0 18 18"><path d="M5 9 V3.5 Q5 2.5 6 2.5 Q7 2.5 7 3.5 V8 V2.5 Q7 1.5 8 1.5 Q9 1.5 9 2.5 V8 V3 Q9 2 10 2 Q11 2 11 3 V8.5 V4.5 Q11 3.5 12 3.5 Q13 3.5 13 4.5 V11 Q13 16 9 16 Q6.5 16 5 13.5 L2.5 10 Q2 9 3 8.5 Q4 8.2 5 9.5 Z" fill="#eee"/></svg>
<svg width="18" height="18" style="left:1294.5px;top:230.5px" viewBox="0 0 18 18"><circle cx="6" cy="5" r="2.8" fill="none" stroke="#eee" stroke-width="1.3"/><circle cx="11.5" cy="5" r="2.8" fill="none" stroke="#eee" stroke-width="1.3"/><rect x="4" y="9" width="8" height="6" fill="none" stroke="#eee" stroke-width="1.3"/><path d="M12 11 L15 9.5 V14.5 L12 13" fill="none" stroke="#eee" stroke-width="1.1"/></svg>
<svg width="18" height="18" style="left:1294.5px;top:260.5px" viewBox="0 0 18 18"><path d="M2.5 2.5 H15.5 V15.5 H2.5 Z M6.8 2.5 V15.5 M11.2 2.5 V15.5 M2.5 6.8 H15.5 M2.5 11.2 H15.5" fill="none" stroke="#eee" stroke-width="1.2"/></svg>

<!-- SIDEBAR N PANEL -->
<div class="a" style="left:1335px;top:74px;width:213px;height:837px;background:rgba(56,56,56,0.35)"></div>
<div class="a" style="left:1335px;top:77px;width:211px;height:322px;background:#3c3c3c;border-radius:5px;border:1px solid #484848"></div>
<svg width="10" height="7" style="left:1343px;top:89px" viewBox="0 0 10 7"><path d="M1 1.5 L5 5.5 L9 1.5" fill="none" stroke="#ccc" stroke-width="1.1"/></svg>
<div class="t" style="left:1356px;top:83px;">View</div>
<svg width="12" height="6" style="left:1526px;top:89px" viewBox="0 0 12 6"><g fill="#777"><rect x="0" y="0" width="1.2" height="1.2"/><rect x="3.5" y="0" width="1.2" height="1.2"/><rect x="7" y="0" width="1.2" height="1.2"/><rect x="10.5" y="0" width="1.2" height="1.2"/><rect x="0" y="3.5" width="1.2" height="1.2"/><rect x="3.5" y="3.5" width="1.2" height="1.2"/><rect x="7" y="3.5" width="1.2" height="1.2"/><rect x="10.5" y="3.5" width="1.2" height="1.2"/></g></svg>
<div class="t r" style="left:0;width:1415px;top:113px;">Focal Length</div>
<div class="num" style="left:1426px;top:111px;width:112px;height:18px;background:#505050"></div>
<div class="t c" style="left:1426px;width:112px;top:113px;">50 mm</div>
<div class="t r" style="left:0;width:1415px;top:135px;">Clip Start</div>
<div class="num" style="left:1426px;top:133px;width:112px;height:38px;background:#505050"></div>
<div class="a" style="left:1426px;top:151px;width:112px;height:1px;background:#3c3c3c"></div>
<div class="t c" style="left:1426px;width:112px;top:135px;">0.01 m</div>
<div class="t r" style="left:0;width:1415px;top:154.5px;">End</div>
<div class="t c" style="left:1426px;width:112px;top:154.5px;">1000 m</div>
<div class="t r" style="left:0;width:1415px;top:191px;">Local Camera</div>
<div class="chk" style="left:1426px;top:191px;width:12px;height:13px;background:#444"></div>
<div class="a" style="left:1446px;top:189px;width:92px;height:17px;background:#2f2f2f;border-radius:3px"></div>
<svg width="14" height="14" viewBox="0 0 14 14" style="left:1451px;top:191px"><path d="M1 4 V1 H4 M10 1 H13 V4 M13 10 V13 H10 M4 13 H1 V10" fill="none" stroke="#555" stroke-width="1"/><rect x="3.5" y="3.5" width="7" height="7" fill="#555"/></svg>
<div class="t" style="left:1468px;top:191px;color:#5f5f5f">Object</div>
<svg width="14" height="14" viewBox="0 0 14 14" style="left:1519px;top:191px"><path d="M2 12 L8 6 M7 4.5 L9.5 7 M9 2.5 Q10.5 1 12 2.5 Q13.5 4 11.5 5.5 L10 7 L7 4 Z" fill="none" stroke="#5f5f5f" stroke-width="1.1"/><path d="M1.5 12.5 L3 11" stroke="#5f5f5f" stroke-width="1.5"/></svg>
<div class="chk on" style="left:1426px;top:214px;background:#3f5880"><svg width="12" height="12" style="left:0;top:0" viewBox="0 0 12 12"><path d="M2.5 6.2 L5 8.7 L9.8 3.3" fill="none" stroke="#8a9ab0" stroke-width="1.6"/></svg></div>
<div class="t" style="left:1442px;top:213px;color:#777">Passepartout</div>
<div class="chk" style="left:1426px;top:250px;background:#444"></div>
<div class="t" style="left:1442px;top:249px;">Render Region</div>
<svg width="10" height="7" style="left:1356px;top:283px" viewBox="0 0 10 7"><path d="M1 1.5 L5 5.5 L9 1.5" fill="none" stroke="#ccc" stroke-width="1.1"/></svg>
<div class="t" style="left:1370px;top:280px;">View Lock</div>
<div class="a" style="left:1336px;top:299px;width:209px;height:99px;background:#343434;border-radius:0 0 4px 4px"></div>
<div class="t r" style="left:0;width:1415px;top:310px;">Lock to Obj...</div>
<div class="tf" style="left:1426px;top:308px;width:112px;height:18px;background:#232323"></div>
<svg width="14" height="14" viewBox="0 0 14 14" style="left:1431px;top:310px"><path d="M1 4 V1 H4 M10 1 H13 V4 M13 10 V13 H10 M4 13 H1 V10" fill="none" stroke="#ddd" stroke-width="1"/><rect x="3.5" y="3.5" width="7" height="7" fill="#ddd"/></svg>
<div class="t" style="left:1451px;top:310px;color:#6a6a6a">Object</div>
<svg width="14" height="14" viewBox="0 0 14 14" style="left:1520px;top:310px"><path d="M2 12 L8 6 M7 4.5 L9.5 7 M9 2.5 Q10.5 1 12 2.5 Q13.5 4 11.5 5.5 L10 7 L7 4 Z" fill="none" stroke="#ddd" stroke-width="1.1"/><path d="M1.5 12.5 L3 11" stroke="#ddd" stroke-width="1.5"/></svg>
<div class="t r" style="left:0;width:1415px;top:335px;">Lock</div>
<div class="chk" style="left:1426px;top:336px;background:#444"></div>
<div class="t" style="left:1442px;top:335px;">To 3D Cursor</div>
<div class="chk" style="left:1426px;top:356px;background:#444"></div>
<div class="t" style="left:1442px;top:355px;">Camera to View</div>
<div class="chk" style="left:1426px;top:376px;background:#444"></div>
<div class="t" style="left:1442px;top:375px;">Rotation</div>

<div class="a" style="left:1335px;top:404px;width:211px;height:228px;background:#3c3c3c;border-radius:5px;border:1px solid #484848"></div>
<svg width="10" height="7" style="left:1343px;top:411px" viewBox="0 0 10 7"><path d="M1 1.5 L5 5.5 L9 1.5" fill="none" stroke="#ccc" stroke-width="1.1"/></svg>
<div class="t" style="left:1356px;top:408px;">3D Cursor</div>
<svg width="12" height="6" style="left:1526px;top:412px" viewBox="0 0 12 6"><g fill="#777"><rect x="0" y="0" width="1.2" height="1.2"/><rect x="3.5" y="0" width="1.2" height="1.2"/><rect x="7" y="0" width="1.2" height="1.2"/><rect x="10.5" y="0" width="1.2" height="1.2"/><rect x="0" y="3.5" width="1.2" height="1.2"/><rect x="3.5" y="3.5" width="1.2" height="1.2"/><rect x="7" y="3.5" width="1.2" height="1.2"/><rect x="10.5" y="3.5" width="1.2" height="1.2"/></g></svg>
<div class="t" style="left:1343px;top:438px;">Location:</div>
<div class="num" style="left:1343px;top:456px;width:195px;height:58px;background:#505050"></div>
<div class="a" style="left:1343px;top:475px;width:195px;height:1px;background:#3c3c3c"></div>
<div class="a" style="left:1343px;top:494px;width:195px;height:1px;background:#3c3c3c"></div>
<div class="t" style="left:1358px;top:458px;">X</div><div class="t r" style="left:0;width:1525px;top:458px;">0.6576 m</div>
<div class="t" style="left:1358px;top:477.5px;">Y</div><div class="t r" style="left:0;width:1525px;top:477.5px;">0.007895 m</div>
<div class="t" style="left:1358px;top:497px;">Z</div><div class="t r" style="left:0;width:1525px;top:497px;">0.5458 m</div>
<div class="t" style="left:1343px;top:523px;">Rotation:</div>
<div class="num" style="left:1343px;top:541px;width:195px;height:58px;background:#505050"></div>
<div class="a" style="left:1343px;top:560px;width:195px;height:1px;background:#3c3c3c"></div>
<div class="a" style="left:1343px;top:579px;width:195px;height:1px;background:#3c3c3c"></div>
<div class="t" style="left:1358px;top:543px;">X</div><div class="t r" style="left:0;width:1525px;top:543px;">33.533°</div>
<div class="t" style="left:1358px;top:562.5px;">Y</div><div class="t r" style="left:0;width:1525px;top:562.5px;">0.000017°</div>
<div class="t" style="left:1358px;top:582px;">Z</div><div class="t r" style="left:0;width:1525px;top:582px;">-22.4°</div>
<div class="mn" style="left:1343px;top:606px;width:195px;height:18px;background:#262626"></div>
<div class="t" style="left:1350px;top:608px;">XYZ Euler</div>
<svg width="10" height="7" style="left:1527px;top:612px" viewBox="0 0 10 7"><path d="M1 1.5 L5 5.5 L9 1.5" fill="none" stroke="#ccc" stroke-width="1.1"/></svg>

<div class="a" style="left:1335px;top:636px;width:211px;height:24px;background:#3c3c3c;border-radius:5px;border:1px solid #484848"></div>
<svg width="7" height="10" style="left:1345px;top:643px" viewBox="0 0 7 10"><path d="M1.5 1 L5.5 5 L1.5 9" fill="none" stroke="#ccc" stroke-width="1.1"/></svg>
<div class="t" style="left:1356px;top:641px;">Collections</div>
<svg width="12" height="6" style="left:1526px;top:645px" viewBox="0 0 12 6"><g fill="#777"><rect x="0" y="0" width="1.2" height="1.2"/><rect x="3.5" y="0" width="1.2" height="1.2"/><rect x="7" y="0" width="1.2" height="1.2"/><rect x="10.5" y="0" width="1.2" height="1.2"/><rect x="0" y="3.5" width="1.2" height="1.2"/><rect x="3.5" y="3.5" width="1.2" height="1.2"/><rect x="7" y="3.5" width="1.2" height="1.2"/><rect x="10.5" y="3.5" width="1.2" height="1.2"/></g></svg>

<div class="a" style="left:1335px;top:663px;width:211px;height:244px;background:#3c3c3c;border-radius:5px;border:1px solid #484848"></div>
<svg width="10" height="7" style="left:1343px;top:671px" viewBox="0 0 10 7"><path d="M1 1.5 L5 5.5 L9 1.5" fill="none" stroke="#ccc" stroke-width="1.1"/></svg>
<div class="t" style="left:1356px;top:668px;">Annotations</div>
<svg width="12" height="6" style="left:1526px;top:672px" viewBox="0 0 12 6"><g fill="#777"><rect x="0" y="0" width="1.2" height="1.2"/><rect x="3.5" y="0" width="1.2" height="1.2"/><rect x="7" y="0" width="1.2" height="1.2"/><rect x="10.5" y="0" width="1.2" height="1.2"/><rect x="0" y="3.5" width="1.2" height="1.2"/><rect x="3.5" y="3.5" width="1.2" height="1.2"/><rect x="7" y="3.5" width="1.2" height="1.2"/><rect x="10.5" y="3.5" width="1.2" height="1.2"/></g></svg>
<div class="mn" style="left:1343px;top:696px;width:30px;height:18px;background:#2c2c2c;border-radius:3px 0 0 3px"></div>
<svg width="20" height="18" viewBox="0 0 20 18" style="left:1344px;top:696px"><path d="M5 12 Q5 7.5 9 7.5 Q13 7.5 13.3 11.5 Q13.3 15 10.5 14.8 Q8 14.5 7.5 9.5 M9 5.8 Q10 4.5 12.5 4.3" fill="none" stroke="#e8e8e8" stroke-width="1.1"/><rect x="3" y="12" width="4" height="4" fill="#111" stroke="#e8e8e8" stroke-width="1.3"/><rect x="13" y="2" width="4" height="4" fill="#111" stroke="#e8e8e8" stroke-width="1.3"/></svg>
<svg width="8" height="6" style="left:1364px;top:703px" viewBox="0 0 8 6"><path d="M1 1.3 L4 4.3 L7 1.3" fill="none" stroke="#ddd" stroke-width="1.1"/></svg>
<div class="tf" style="left:1373px;top:696px;width:105px;height:18px;border-radius:0"></div>
<div class="t" style="left:1381px;top:698px;">Annotations</div>
<div class="num" style="left:1478px;top:696px;width:60px;height:18px;background:#464646;border-radius:0 3px 3px 0"></div>
<div class="a" style="left:1498px;top:696px;width:1px;height:18px;background:#363636"></div>
<div class="a" style="left:1519px;top:696px;width:1px;height:18px;background:#363636"></div>
<svg width="14" height="14" viewBox="0 0 14 14" style="left:1481px;top:698px"><path d="M7 1 L12.5 3 V7 Q12.5 11 7 13 Q1.5 11 1.5 7 V3 Z" fill="none" stroke="#888" stroke-width="1.1"/></svg>
<svg width="14" height="14" viewBox="0 0 14 14" style="left:1502px;top:698px"><path d="M5 1.5 H9.5 L12.5 4.5 V10.5 H5 Z M3 4 V12.5 H10" fill="none" stroke="#ddd" stroke-width="1.1"/></svg>
<svg width="12" height="12" viewBox="0 0 12 12" style="left:1523px;top:699px"><path d="M2 2 L10 10 M10 2 L2 10" stroke="#ddd" stroke-width="1.2"/></svg>
<div class="a" style="left:1343px;top:721px;width:167px;height:77px;background:#2a2a2a;border-radius:3px"></div>
<div class="a blue" style="left:1348px;top:726px;width:157px;height:18px;border-radius:3px"></div>
<div class="a" style="left:1353px;top:727px;width:16px;height:16px;background:#5b95c8;border-radius:3px;border:1px solid #3e6a96"></div>
<div class="t" style="left:1379px;top:728px;">Note</div>
<svg width="14" height="14" viewBox="0 0 14 14" style="left:1464px;top:728px"><path d="M4.5 1.5 H12.5 V9.5 M1.5 4.5 H9.5 V12.5 H1.5 Z" fill="none" stroke="#eee" stroke-width="1.1"/><path d="M4 7 V10 H7" fill="none" stroke="#eee" stroke-width="0.9"/></svg>
<svg width="14" height="14" viewBox="0 0 14 14" style="left:1485px;top:728px"><path d="M1 7 Q7 1 13 7 Q7 13 1 7 Z" fill="none" stroke="#fff" stroke-width="1.3"/><circle cx="7" cy="7" r="2.3" fill="#fff"/></svg>
<svg width="8" height="8" viewBox="0 0 8 8" style="left:1353px;top:786px"><path d="M1 1 L7 4 L1 7 Z" fill="#ccc"/></svg>
<svg width="12" height="6" style="left:1430px;top:787px" viewBox="0 0 12 6"><g fill="#aaa"><rect x="0" y="0" width="1.2" height="1.2"/><rect x="3.5" y="0" width="1.2" height="1.2"/><rect x="7" y="0" width="1.2" height="1.2"/><rect x="10.5" y="0" width="1.2" height="1.2"/><rect x="0" y="3.5" width="1.2" height="1.2"/><rect x="3.5" y="3.5" width="1.2" height="1.2"/><rect x="7" y="3.5" width="1.2" height="1.2"/><rect x="10.5" y="3.5" width="1.2" height="1.2"/></g></svg>
<div class="num" style="left:1521px;top:721px;width:17px;height:38px;background:#464646"></div>
<div class="a" style="left:1521px;top:739px;width:17px;height:1px;background:#363636"></div>
<div class="t c" style="left:1521px;top:722px;width:17px;font-size:15px;line-height:16px;color:#ddd">+</div>
<div class="t c" style="left:1521px;top:741px;width:17px;font-size:15px;line-height:16px;color:#ddd">&#8211;</div>
<div class="num blue" style="left:1343px;top:806px;width:195px;height:18px"></div>
<div class="t" style="left:1358px;top:808px;">Opacity</div><div class="t r" style="left:0;width:1525px;top:808px;">1.000</div>
<div class="num" style="left:1343px;top:831px;width:195px;height:18px;background:#505050"></div>
<div class="t" style="left:1358px;top:833px;">Thickness</div><div class="t r" style="left:0;width:1525px;top:833px;">3 px</div>
<div class="num" style="left:1343px;top:856px;width:175px;height:18px;background:#505050;border-radius:3px 0 0 3px"></div>
<div class="num" style="left:1519px;top:856px;width:19px;height:18px;background:#505050;border-radius:0 3px 3px 0"></div>
<svg width="12" height="14" viewBox="0 0 12 14" style="left:1348px;top:858px"><rect x="1.5" y="6.5" width="9" height="6.5" fill="none" stroke="#aaa" stroke-width="1.1"/><path d="M3.5 6.5 V4 Q3.5 1.5 6 1.5 Q8.5 1.5 8.5 3.5" fill="none" stroke="#aaa" stroke-width="1.1"/></svg>
<div class="t c" style="left:1360px;width:158px;top:858px;">Frame: -73 (Unlocked)</div>
<svg width="12" height="12" viewBox="0 0 12 12" style="left:1522px;top:859px"><path d="M2 2 L10 10 M10 2 L2 10" stroke="#ddd" stroke-width="1.2"/></svg>
<svg width="7" height="10" style="left:1358px;top:891px" viewBox="0 0 7 10"><path d="M1.5 1 L5.5 5 L1.5 9" fill="none" stroke="#ccc" stroke-width="1.1"/></svg>
<div class="chk" style="left:1369px;top:890px;background:#444"></div>
<div class="t" style="left:1384px;top:889px;">Onion Skin</div>

<!-- sidebar tabs -->
<div class="a" style="left:1554px;top:80px;width:17px;height:40px;background:#1f1f1f;border-radius:4px"></div>
<div class="a" style="left:1554px;top:125px;width:17px;height:39px;background:#1f1f1f;border-radius:4px"></div>
<div class="a" style="left:1554px;top:169px;width:17px;height:41px;background:#343434;border-radius:4px;border:1px solid #444"></div>
<div class="a" style="left:1554px;top:216px;width:17px;height:68px;background:#1f1f1f;border-radius:4px"></div>
<div class="a" style="left:1554px;top:290px;width:17px;height:46px;background:#1f1f1f;border-radius:4px"></div>
<div class="a" style="left:1554px;top:341px;width:17px;height:35px;background:#1f1f1f;border-radius:4px"></div>
<div class="a" style="left:1554px;top:80px;width:17px;height:40px;writing-mode:vertical-rl;font-size:11.5px;line-height:17px;text-align:center;color:#aaa">Item</div>
<div class="a" style="left:1554px;top:125px;width:17px;height:39px;writing-mode:vertical-rl;font-size:11.5px;line-height:17px;text-align:center;color:#aaa">Tool</div>
<div class="a" style="left:1554px;top:169px;width:17px;height:41px;writing-mode:vertical-rl;font-size:11.5px;line-height:17px;text-align:center;color:#eee">View</div>
<div class="a" style="left:1554px;top:216px;width:17px;height:68px;writing-mode:vertical-rl;font-size:11.5px;line-height:17px;text-align:center;color:#aaa">Animation</div>
<div class="a" style="left:1554px;top:290px;width:17px;height:46px;writing-mode:vertical-rl;font-size:11.5px;line-height:17px;text-align:center;color:#aaa">Rigify</div>
<div class="a" style="left:1554px;top:341px;width:17px;height:35px;writing-mode:vertical-rl;font-size:11.5px;line-height:17px;text-align:center;color:#aaa">Edit</div>


<!-- TIMELINE -->
<div class="a" style="left:1px;top:914px;width:1574px;height:69px;border-radius:6px;overflow:hidden;background:#1e1e1e">
<div class="a" style="left:0;top:0;width:1574px;height:26px;background:#2e2e2e"></div>
<div class="a" style="left:0;top:49px;width:281px;height:20px;background:#212121"></div>
<div class="a" style="left:281px;top:49px;width:1293px;height:20px;background:#2e2e2e"></div>

<div class="a" style="left:47.0px;top:49px;width:1px;height:20px;background:#1b1b1b"></div><div class="a" style="left:123.0px;top:49px;width:1px;height:20px;background:#1b1b1b"></div><div class="a" style="left:199.0px;top:49px;width:1px;height:20px;background:#1b1b1b"></div><div class="a" style="left:275.0px;top:49px;width:1px;height:20px;background:#1b1b1b"></div><div class="a" style="left:313.0px;top:49px;width:1px;height:20px;background:#232323"></div><div class="a" style="left:351.0px;top:49px;width:1px;height:20px;background:#1a1a1a"></div><div class="a" style="left:389.0px;top:49px;width:1px;height:20px;background:#232323"></div><div class="a" style="left:427.0px;top:49px;width:1px;height:20px;background:#1a1a1a"></div><div class="a" style="left:465.0px;top:49px;width:1px;height:20px;background:#232323"></div><div class="a" style="left:503.0px;top:49px;width:1px;height:20px;background:#1a1a1a"></div><div class="a" style="left:541.0px;top:49px;width:1px;height:20px;background:#232323"></div><div class="a" style="left:579.0px;top:49px;width:1px;height:20px;background:#1a1a1a"></div><div class="a" style="left:617.0px;top:49px;width:1px;height:20px;background:#232323"></div><div class="a" style="left:655.0px;top:49px;width:1px;height:20px;background:#1a1a1a"></div><div class="a" style="left:693.0px;top:49px;width:1px;height:20px;background:#232323"></div><div class="a" style="left:731.0px;top:49px;width:1px;height:20px;background:#1a1a1a"></div><div class="a" style="left:769.0px;top:49px;width:1px;height:20px;background:#232323"></div><div class="a" style="left:807.0px;top:49px;width:1px;height:20px;background:#1a1a1a"></div><div class="a" style="left:845.0px;top:49px;width:1px;height:20px;background:#232323"></div><div class="a" style="left:883.0px;top:49px;width:1px;height:20px;background:#1a1a1a"></div><div class="a" style="left:921.0px;top:49px;width:1px;height:20px;background:#232323"></div><div class="a" style="left:959.0px;top:49px;width:1px;height:20px;background:#1a1a1a"></div><div class="a" style="left:997.0px;top:49px;width:1px;height:20px;background:#232323"></div><div class="a" style="left:1035.0px;top:49px;width:1px;height:20px;background:#1a1a1a"></div><div class="a" style="left:1073.0px;top:49px;width:1px;height:20px;background:#232323"></div><div class="a" style="left:1111.0px;top:49px;width:1px;height:20px;background:#1a1a1a"></div><div class="a" style="left:1149.0px;top:49px;width:1px;height:20px;background:#232323"></div><div class="a" style="left:1187.0px;top:49px;width:1px;height:20px;background:#1a1a1a"></div><div class="a" style="left:1225.0px;top:49px;width:1px;height:20px;background:#232323"></div><div class="a" style="left:1263.0px;top:49px;width:1px;height:20px;background:#1a1a1a"></div><div class="a" style="left:1301.0px;top:49px;width:1px;height:20px;background:#232323"></div><div class="a" style="left:1339.0px;top:49px;width:1px;height:20px;background:#1a1a1a"></div><div class="a" style="left:1377.0px;top:49px;width:1px;height:20px;background:#232323"></div><div class="a" style="left:1415.0px;top:49px;width:1px;height:20px;background:#1a1a1a"></div><div class="a" style="left:1453.0px;top:49px;width:1px;height:20px;background:#232323"></div><div class="a" style="left:1491.0px;top:49px;width:1px;height:20px;background:#1a1a1a"></div><div class="a" style="left:1529.0px;top:49px;width:1px;height:20px;background:#232323"></div><div class="a" style="left:1567.0px;top:49px;width:1px;height:20px;background:#1a1a1a"></div><div class="a" style="left:281.5px;top:49px;width:1.5px;height:20px;background:#0e0e0e"></div><div class="a" style="left:13px;top:62px;width:1233px;height:3px;border-radius:2px;background:#3a3a3a"></div></div>
<div class="t c" style="left:28.0px;width:40px;top:944.5px;color:#a8a8a8">-36</div><div class="t c" style="left:104.0px;width:40px;top:944.5px;color:#a8a8a8">-24</div><div class="t c" style="left:180.0px;width:40px;top:944.5px;color:#a8a8a8">-12</div><div class="t c" style="left:256.0px;width:40px;top:944.5px;color:#a8a8a8">0</div><div class="t c" style="left:332.0px;width:40px;top:944.5px;color:#a8a8a8">12</div><div class="t c" style="left:408.0px;width:40px;top:944.5px;color:#a8a8a8">24</div><div class="t c" style="left:484.0px;width:40px;top:944.5px;color:#a8a8a8">36</div><div class="t c" style="left:560.0px;width:40px;top:944.5px;color:#a8a8a8">48</div><div class="t c" style="left:636.0px;width:40px;top:944.5px;color:#a8a8a8">60</div><div class="t c" style="left:712.0px;width:40px;top:944.5px;color:#a8a8a8">72</div><div class="t c" style="left:788.0px;width:40px;top:944.5px;color:#a8a8a8">84</div><div class="t c" style="left:864.0px;width:40px;top:944.5px;color:#a8a8a8">96</div><div class="t c" style="left:940.0px;width:40px;top:944.5px;color:#a8a8a8">108</div><div class="t c" style="left:1016.0px;width:40px;top:944.5px;color:#a8a8a8">120</div><div class="t c" style="left:1092.0px;width:40px;top:944.5px;color:#a8a8a8">132</div><div class="t c" style="left:1168.0px;width:40px;top:944.5px;color:#a8a8a8">144</div><div class="t c" style="left:1244.0px;width:40px;top:944.5px;color:#a8a8a8">156</div><div class="t c" style="left:1320.0px;width:40px;top:944.5px;color:#a8a8a8">168</div><div class="t c" style="left:1396.0px;width:40px;top:944.5px;color:#a8a8a8">180</div><div class="t c" style="left:1472.0px;width:40px;top:944.5px;color:#a8a8a8">192</div><svg width="7" height="10" style="left:3px;top:966px" viewBox="0 0 7 10"><path d="M1.5 1 L5.5 5 L1.5 9" fill="none" stroke="#999" stroke-width="1"/></svg>
<div class="a" style="left:11px;top:918px;width:30px;height:18px;background:#262626;border-radius:4px"></div>
<svg width="14" height="14" viewBox="0 0 14 14" style="left:14px;top:920px"><circle cx="7" cy="7" r="6.3" fill="#eee"/><path d="M8.5 3.5 L5.5 7 L8.5 10.5" fill="none" stroke="#222" stroke-width="1.4"/></svg>
<svg width="8" height="6" style="left:31px;top:925px" viewBox="0 0 8 6"><path d="M1 1.3 L4 4.3 L7 1.3" fill="none" stroke="#ddd" stroke-width="1.2"/></svg><div class="t" style="left:53px;top:920px;">View</div><div class="t" style="left:94px;top:920px;">Marker</div>
<div class="a" style="left:144px;top:918px;width:70px;height:18px;background:#262626;border-radius:4px"></div>
<div class="t" style="left:151px;top:920px;">Playback</div><svg width="8" height="6" style="left:204px;top:925px" viewBox="0 0 8 6"><path d="M1 1.3 L4 4.3 L7 1.3" fill="none" stroke="#ddd" stroke-width="1.2"/></svg>
<div class="a" style="left:641px;top:918px;width:36px;height:18px;background:#262626;border-radius:4px"></div>
<div class="a" style="left:641px;top:918px;width:18px;height:18px;background:#4a4a4a;border-radius:4px 0 0 4px"></div>
<svg width="14" height="14" viewBox="0 0 14 14" style="left:643px;top:920px"><circle cx="7" cy="7" r="5" fill="none" stroke="#ccc" stroke-width="1.1"/></svg>
<svg width="8" height="6" style="left:664px;top:925px" viewBox="0 0 8 6"><path d="M1 1.3 L4 4.3 L7 1.3" fill="none" stroke="#555" stroke-width="1.2"/></svg>
<div class="a" style="left:686px;top:918px;width:118px;height:18px;background:#464646;border-radius:4px"></div>
<svg width="118" height="18" viewBox="0 0 118 18" style="left:686px;top:918px">
<g stroke="#363636" stroke-width="1"><path d="M19.5 0V18 M39.5 0V18 M58.5 0V18 M78.5 0V18 M98.5 0V18"/></g>
<g fill="#eee">
<rect x="5" y="4" width="1.8" height="10"/><path d="M15 4 V14 L8 9 Z"/>
<path d="M22 9 L26 5 L30 9 L26 13 Z"/><path d="M37 4.5 V13.5 L31 9 Z"/>
<path d="M53 3.5 V14.5 L45 9 Z"/>
<path d="M65 3.5 V14.5 L73 9 Z"/>
<path d="M81 4.5 V13.5 L87 9 Z"/><path d="M88 9 L92 5 L96 9 L92 13 Z"/>
<path d="M103 4 V14 L110 9 Z"/><rect x="111" y="4" width="1.8" height="10"/>
</g></svg>
<div class="a" style="left:811px;top:918px;width:57px;height:18px;background:#262626;border-radius:4px"></div>
<div class="a" style="left:811px;top:918px;width:39px;height:18px;background:#464646;border-radius:4px 0 0 4px"></div>
<svg width="39" height="18" viewBox="0 0 39 18" style="left:811px;top:918px"><path d="M19.5 0V18" stroke="#363636"/><g fill="#eee"><path d="M11 4.5 V13.5 L5 9 Z"/><rect x="12.5" y="4.5" width="1.8" height="9"/><rect x="24" y="4.5" width="1.8" height="9"/><path d="M27.5 4.5 V13.5 L33.5 9 Z"/></g></svg>
<svg width="8" height="6" style="left:855px;top:925px" viewBox="0 0 8 6"><path d="M1 1.3 L4 4.3 L7 1.3" fill="none" stroke="#ddd" stroke-width="1.2"/></svg>
<div class="a" style="left:876px;top:918px;width:38px;height:18px;background:#262626;border-radius:4px"></div>
<div class="a" style="left:876px;top:918px;width:19px;height:18px;background:#464646;border-radius:4px 0 0 4px"></div>
<svg width="14" height="14" viewBox="0 0 14 14" style="left:878px;top:920px"><path d="M2.5 11 V7 Q2.5 2 7 2 Q11.5 2 11.5 7 V11 M4.5 11 V7 Q4.5 4 7 4 Q9.5 4 9.5 7 V11 M1.5 13 H12.5" fill="none" stroke="#bbb" stroke-width="0.9"/></svg>
<svg width="8" height="6" style="left:900px;top:925px" viewBox="0 0 8 6"><path d="M1 1.3 L4 4.3 L7 1.3" fill="none" stroke="#ddd" stroke-width="1.2"/></svg>
<div class="a" style="left:1237px;top:918px;width:73px;height:18px;background:#4d4d4d;border-radius:4px"></div>
<div class="t c" style="left:1237px;width:73px;top:920px;">-73</div>
<div class="a" style="left:1317px;top:918px;width:194px;height:18px;background:#4d4d4d;border-radius:4px"></div>
<div class="a" style="left:1335px;top:918px;width:1px;height:18px;background:#3c3c3c"></div>
<div class="a" style="left:1424px;top:918px;width:1px;height:18px;background:#3c3c3c"></div>
<svg width="14" height="14" viewBox="0 0 14 14" style="left:1319px;top:920px"><circle cx="7" cy="8" r="5" fill="none" stroke="#ddd" stroke-width="1.1"/><path d="M7 5 V8 H9.5 M5 1.5 H9 M7 1.5 V3 M11 3 L12.5 4.5" fill="none" stroke="#ddd" stroke-width="1.1"/></svg>
<div class="t" style="left:1351px;top:920px;">Start</div><div class="t r" style="left:0;width:1411px;top:920px">1</div>
<div class="t" style="left:1440px;top:920px;">End</div><div class="t r" style="left:0;width:1497px;top:920px">250</div>
<div class="a" style="left:1528px;top:918px;width:37px;height:18px;background:#262626;border-radius:4px"></div>
<div class="a blue" style="left:1528px;top:918px;width:19px;height:18px;border-radius:4px 0 0 4px"></div>
<svg width="16" height="16" viewBox="0 0 16 16" style="left:1529px;top:919px"><circle cx="9.5" cy="6.5" r="5" fill="#eee"/><path d="M4.5 6.5 A5 5 0 1 0 12 12" fill="none" stroke="#eee" stroke-width="1.3"/></svg>
<svg width="8" height="6" style="left:1551px;top:925px" viewBox="0 0 8 6"><path d="M1 1.3 L4 4.3 L7 1.3" fill="none" stroke="#ddd" stroke-width="1.2"/></svg>
<!-- STATUS BAR -->
<svg width="16" height="16" viewBox="0 0 16 16" style="left:1853px;top:987px"><circle cx="7.5" cy="7.5" r="6.3" fill="none" stroke="#bbb" stroke-width="1"/><ellipse cx="7.5" cy="7.5" rx="2.8" ry="6.3" fill="none" stroke="#bbb" stroke-width="0.9"/><path d="M1.5 5.5 H13.5 M1.5 9.5 H13.5" stroke="#bbb" stroke-width="0.9"/></svg>
<div class="t" style="left:1866px;top:992px;font-size:9px;color:#bbb">1</div>
<div class="a" style="left:1875px;top:988px;width:1px;height:13px;background:#555"></div>
<div class="t" style="left:1880px;top:988px;color:#bbb">5.0.0</div>


<!-- OUTLINER -->
<div class="a" style="left:1578px;top:23px;width:334px;height:422px;border-radius:6px;overflow:hidden;background:#282828"></div>
<div class="a" style="left:1588px;top:26px;width:31px;height:19px;background:#232323;border:1px solid #303030;border-radius:4px"></div>
<svg width="16" height="16" viewBox="0 0 16 16" style="left:1591px;top:28px"><rect x="1" y="1" width="6" height="3" fill="#eee"/><path d="M2.5 4 V13 H6 M2.5 9 H6" fill="none" stroke="#ccc" stroke-width="1"/><rect x="6.5" y="7.5" width="8" height="3" fill="#eee"/><rect x="6.5" y="11.5" width="8" height="3" fill="#eee"/></svg>
<svg width="8" height="6" style="left:1607px;top:33px" viewBox="0 0 8 6"><path d="M1 1.3 L4 4.3 L7 1.3" fill="none" stroke="#ddd" stroke-width="1.2"/></svg>
<div class="a" style="left:1625px;top:26px;width:31px;height:19px;background:#232323;border:1px solid #303030;border-radius:4px"></div>
<svg width="16" height="16" viewBox="0 0 16 16" style="left:1627px;top:28px"><path d="M5 1.5 H14.5 V10.5 H5 Z" fill="none" stroke="#ddd" stroke-width="1.1"/><path d="M3 3.5 V12.5 H12.5 M1 5.5 V14.5 H10.5" fill="none" stroke="#ddd" stroke-width="1"/><path d="M6 9.5 L9 5 L11 7.5 L12 6.5 L14 9.5 Z" fill="#eee"/><circle cx="7.5" cy="4" r="1" fill="#eee"/></svg>
<svg width="8" height="6" style="left:1645px;top:33px" viewBox="0 0 8 6"><path d="M1 1.3 L4 4.3 L7 1.3" fill="none" stroke="#ddd" stroke-width="1.2"/></svg>
<div class="tf" style="left:1677px;top:26px;width:119px;height:19px;border:1px solid #333;border-radius:4px"></div>
<svg width="14" height="14" viewBox="0 0 14 14" style="left:1682px;top:29px"><circle cx="5.5" cy="5.5" r="4.3" fill="none" stroke="#ddd" stroke-width="1.2"/><path d="M8.6 8.6 L13 13" stroke="#ddd" stroke-width="1.4"/></svg>
<div class="t" style="left:1703px;top:28px;color:#6e6e6e">Search</div>
<div class="a" style="left:1852px;top:26px;width:31px;height:19px;background:#232323;border:1px solid #303030;border-radius:4px"></div>
<svg width="14" height="14" viewBox="0 0 14 14" style="left:1855px;top:28px"><path d="M1 1.5 H13 L8.5 7 V13 L5.5 11 V7 Z" fill="none" stroke="#ddd" stroke-width="1.1"/></svg>
<svg width="8" height="6" style="left:1872px;top:33px" viewBox="0 0 8 6"><path d="M1 1.3 L4 4.3 L7 1.3" fill="none" stroke="#ddd" stroke-width="1.2"/></svg>
<div class="a" style="left:1889px;top:26px;width:20px;height:19px;background:#4a4a4a;border-radius:4px"></div>
<svg width="16" height="16" viewBox="0 0 16 16" style="left:1891px;top:28px"><rect x="1" y="4" width="10" height="2.2" fill="#bbb"/><path d="M2 7 H10 V14.5 H2 Z" fill="none" stroke="#bbb" stroke-width="1.1"/><rect x="4.5" y="9" width="3" height="1.2" fill="#bbb"/><circle cx="12" cy="4" r="3.6" fill="#4a4a4a" stroke="#eee" stroke-width="1"/><path d="M12 2 V6 M10 4 H14" stroke="#eee" stroke-width="1.1"/></svg>
<div class="a" style="left:1578px;top:70.8px;width:334px;height:20.0px;background:#2b2b2b"></div><div class="a" style="left:1578px;top:110.8px;width:334px;height:20.0px;background:#2b2b2b"></div><div class="a" style="left:1578px;top:150.8px;width:334px;height:20.0px;background:#2b2b2b"></div><div class="a" style="left:1578px;top:190.8px;width:334px;height:20.0px;background:#2b2b2b"></div><div class="a" style="left:1578px;top:230.8px;width:334px;height:20.0px;background:#2b2b2b"></div><div class="a" style="left:1578px;top:270.8px;width:334px;height:20.0px;background:#2b2b2b"></div><div class="a" style="left:1578px;top:310.8px;width:334px;height:20.0px;background:#2b2b2b"></div><div class="a" style="left:1578px;top:350.8px;width:334px;height:20.0px;background:#2b2b2b"></div><div class="a" style="left:1578px;top:390.8px;width:334px;height:20.0px;background:#2b2b2b"></div><div class="a" style="left:1578px;top:430.8px;width:334px;height:13.7px;background:#2b2b2b;border-radius:0 0 6px 6px"></div>
<div class="a" style="left:1608px;top:110px;width:1px;height:296px;background:#444"></div><div class="a" style="left:1628px;top:131px;width:1px;height:140px;background:#444"></div><div class="a" style="left:1628px;top:293px;width:1px;height:16px;background:#444"></div><div class="a" style="left:1628px;top:353px;width:1px;height:16px;background:#444"></div><div class="a" style="left:1582px;top:251px;width:329px;height:19px;background:#3b5a94;border:1px solid #4d6ca6;border-radius:3px"></div><svg width="15" height="15" viewBox="0 0 15 15" style="left:1584px;top:253px"><g fill="none" stroke="#ddd" stroke-width="1"><rect x="1" y="1.5" width="2.5" height="2.5"/><rect x="1" y="11" width="2.5" height="2.5"/><rect x="11" y="11" width="2.5" height="2.5"/><path d="M2.25 4 V11 M3.5 12.25 H11 M3.5 2.75 H9 M12.25 6.5 V11"/></g><rect x="10" y="0.5" width="4.5" height="4.5" fill="#eee"/></svg><svg width="14" height="13" viewBox="0 0 14 13" style="left:1602px;top:54.3px"><rect x="0.5" y="0.5" width="13" height="2.6" fill="#e0e0e0"/><path d="M1.5 4 H12.5 V12.5 H1.5 Z" fill="#e0e0e0"/><rect x="5" y="5.5" width="4" height="1.6" fill="#222"/></svg><div class="t" style="left:1623px;top:53.8px;color:#e0e0e0">Scene Collection</div><svg width="6" height="9" style="left:1608px;top:76.3px" viewBox="0 0 6 9"><path d="M1 0.8 L5 4.5 L1 8.2" fill="none" stroke="#ccc" stroke-width="1.1"/></svg><svg width="14" height="13" viewBox="0 0 14 13" style="left:1621px;top:74.3px"><rect x="0.5" y="0.5" width="13" height="2.6" fill="#e0e0e0"/><path d="M1.5 4 H12.5 V12.5 H1.5 Z" fill="#e0e0e0"/><rect x="5" y="5.5" width="4" height="1.6" fill="#222"/></svg><div class="t" style="left:1643px;top:73.8px;color:#e0e0e0">Structure</div><svg width="25" height="12" viewBox="0 0 36 13" preserveAspectRatio="none" style="left:1700px;top:74.3px"><g fill="none" stroke="#ddd" stroke-width="1.1"><path d="M1.5 1.5 H9.5 V5 M0.5 7 H11 M5.8 7 V12.5"/><path d="M13.5 1.5 H21.5 M17.5 1.5 L14 5 M17.5 1.5 L21 5 M17.5 7 V9 M12.5 9.5 H23"/><path d="M25 1 H33 V4.5 H25 Z M24.5 6.5 H34 M29.2 4.5 V6.5 M25.5 8 H33 V10 H25.5 V12.5 H33.5"/></g></svg><svg width="11" height="11" viewBox="0 0 11 11" style="left:1852px;top:75.3px"><rect x="0" y="0" width="11" height="11" rx="1" fill="#e8e8e8"/><path d="M2.3 5.6 L4.5 7.8 L8.8 3" fill="none" stroke="#1a1a1a" stroke-width="1.6"/></svg><svg width="15" height="11" viewBox="0 0 15 11" style="left:1870px;top:75.3px"><path d="M1 5.5 Q7.5 -1 14 5.5 Q7.5 12 1 5.5 Z" fill="none" stroke="#eee" stroke-width="1.5"/><circle cx="7.5" cy="5.5" r="2.4" fill="#eee"/></svg><svg width="14" height="12" viewBox="0 0 14 12" style="left:1891px;top:74.8px"><path d="M0.5 2.5 H4 L5 0.8 H9 L10 2.5 H13.5 V11.5 H0.5 Z" fill="#eee"/><circle cx="7" cy="6.8" r="3" fill="#282828"/><circle cx="7" cy="6.8" r="1.6" fill="#eee"/></svg><svg width="15" height="14" viewBox="0 0 15 14" style="left:1748px;top:73.8px"><path d="M1.5 1.5 H13.5 L7.5 13 Z" fill="none" stroke="#e8963c" stroke-width="2.6" stroke-linejoin="round"/></svg><div class="t" style="left:1755px;top:77.8px;font-size:9.5px;line-height:12px;color:#ddd">53</div><svg width="14" height="13" viewBox="0 0 14 13" style="left:1768px;top:74.3px"><rect x="0.5" y="0.5" width="13" height="2.6" fill="#e0e0e0"/><path d="M1.5 4 H12.5 V12.5 H1.5 Z" fill="#e0e0e0"/><rect x="5" y="5.5" width="4" height="1.6" fill="#222"/></svg><div class="t" style="left:1781px;top:77.8px;font-size:9.5px;line-height:12px;color:#ddd">2</div><svg width="9" height="6" style="left:1606px;top:97.8px" viewBox="0 0 9 6"><path d="M0.8 1 L4.5 5 L8.2 1" fill="none" stroke="#ccc" stroke-width="1.1"/></svg><svg width="14" height="13" viewBox="0 0 14 13" style="left:1621px;top:94.3px"><rect x="0.5" y="0.5" width="13" height="2.6" fill="#e0e0e0"/><path d="M1.5 4 H12.5 V12.5 H1.5 Z" fill="#e0e0e0"/><rect x="5" y="5.5" width="4" height="1.6" fill="#222"/></svg><div class="t" style="left:1643px;top:93.8px;color:#e0e0e0">Object</div><svg width="11" height="11" viewBox="0 0 11 11" style="left:1852px;top:95.3px"><rect x="0" y="0" width="11" height="11" rx="1" fill="#e8e8e8"/><path d="M2.3 5.6 L4.5 7.8 L8.8 3" fill="none" stroke="#1a1a1a" stroke-width="1.6"/></svg><svg width="15" height="11" viewBox="0 0 15 11" style="left:1870px;top:95.3px"><path d="M1 5.5 Q7.5 -1 14 5.5 Q7.5 12 1 5.5 Z" fill="none" stroke="#eee" stroke-width="1.5"/><circle cx="7.5" cy="5.5" r="2.4" fill="#eee"/></svg><svg width="14" height="12" viewBox="0 0 14 12" style="left:1891px;top:94.8px"><path d="M0.5 2.5 H4 L5 0.8 H9 L10 2.5 H13.5 V11.5 H0.5 Z" fill="#eee"/><circle cx="7" cy="6.8" r="3" fill="#282828"/><circle cx="7" cy="6.8" r="1.6" fill="#eee"/></svg><svg width="9" height="6" style="left:1626px;top:117.8px" viewBox="0 0 9 6"><path d="M0.8 1 L4.5 5 L8.2 1" fill="none" stroke="#ccc" stroke-width="1.1"/></svg><div class="a" style="left:1639px;top:111.3px;width:20px;height:18px;background:#3a3a3a;border:1px solid #555;border-radius:4px"></div><svg width="14" height="13" viewBox="0 0 14 13" style="left:1640px;top:114.3px"><rect x="0.5" y="0.5" width="13" height="2.6" fill="#e0e0e0"/><path d="M1.5 4 H12.5 V12.5 H1.5 Z" fill="#e0e0e0"/><rect x="5" y="5.5" width="4" height="1.6" fill="#222"/></svg><div class="t" style="left:1663px;top:113.8px;color:#e0e0e0">Display Stand</div><svg width="11" height="11" viewBox="0 0 11 11" style="left:1852px;top:115.3px"><rect x="0" y="0" width="11" height="11" rx="1" fill="#e8e8e8"/><path d="M2.3 5.6 L4.5 7.8 L8.8 3" fill="none" stroke="#1a1a1a" stroke-width="1.6"/></svg><svg width="15" height="11" viewBox="0 0 15 11" style="left:1870px;top:115.3px"><path d="M1 5.5 Q7.5 -1 14 5.5 Q7.5 12 1 5.5 Z" fill="none" stroke="#eee" stroke-width="1.5"/><circle cx="7.5" cy="5.5" r="2.4" fill="#eee"/></svg><svg width="14" height="12" viewBox="0 0 14 12" style="left:1891px;top:114.8px"><path d="M0.5 2.5 H4 L5 0.8 H9 L10 2.5 H13.5 V11.5 H0.5 Z" fill="#eee"/><circle cx="7" cy="6.8" r="3" fill="#282828"/><circle cx="7" cy="6.8" r="1.6" fill="#eee"/></svg><svg width="6" height="9" style="left:1648px;top:136.3px" viewBox="0 0 6 9"><path d="M1 0.8 L5 4.5 L1 8.2" fill="none" stroke="#ccc" stroke-width="1.1"/></svg><svg width="15" height="14" viewBox="0 0 15 14" style="left:1662px;top:133.8px"><path d="M1.5 1.5 H13.5 L7.5 13 Z" fill="none" stroke="#e8963c" stroke-width="2.6" stroke-linejoin="round"/></svg><div class="a" style="left:1591px;top:138.8px;width:4px;height:4px;border-radius:50%;background:#ddd"></div><div class="t" style="left:1683px;top:133.8px;color:#e0e0e0">Circle.006</div><svg width="15" height="11" viewBox="0 0 15 11" style="left:1870px;top:135.3px"><path d="M1 5.5 Q7.5 -1 14 5.5 Q7.5 12 1 5.5 Z" fill="none" stroke="#eee" stroke-width="1.5"/><circle cx="7.5" cy="5.5" r="2.4" fill="#eee"/></svg><svg width="14" height="12" viewBox="0 0 14 12" style="left:1891px;top:134.8px"><path d="M0.5 2.5 H4 L5 0.8 H9 L10 2.5 H13.5 V11.5 H0.5 Z" fill="#eee"/><circle cx="7" cy="6.8" r="3" fill="#282828"/><circle cx="7" cy="6.8" r="1.6" fill="#eee"/></svg><svg width="15" height="14" viewBox="0 0 15 14" style="left:1760px;top:133.8px"><path d="M2.5 2.5 H12.5 L7.5 11.5 Z" fill="none" stroke="#3ec59a" stroke-width="1.1"/><g fill="#282828" stroke="#3ec59a" stroke-width="1.1"><circle cx="2.5" cy="2.5" r="1.6"/><circle cx="12.5" cy="2.5" r="1.6"/><circle cx="7.5" cy="11.5" r="1.6"/></g></svg><svg width="15" height="14" viewBox="0 0 15 14" style="left:1780px;top:133.8px"><path d="M1.5 1.5 H13.5 L7.5 13 Z" fill="none" stroke="#e8963c" stroke-width="2.6" stroke-linejoin="round"/></svg><div class="t" style="left:1789px;top:137.8px;font-size:9.5px;line-height:12px;color:#ddd">5</div><svg width="6" height="9" style="left:1648px;top:156.3px" viewBox="0 0 6 9"><path d="M1 0.8 L5 4.5 L1 8.2" fill="none" stroke="#ccc" stroke-width="1.1"/></svg><svg width="15" height="14" viewBox="0 0 15 14" style="left:1662px;top:153.8px"><path d="M1.5 1.5 H13.5 L7.5 13 Z" fill="none" stroke="#e8963c" stroke-width="2.6" stroke-linejoin="round"/></svg><div class="a" style="left:1591px;top:158.8px;width:4px;height:4px;border-radius:50%;background:#ddd"></div><div class="t" style="left:1683px;top:153.8px;color:#e0e0e0">Plane.044</div><svg width="15" height="11" viewBox="0 0 15 11" style="left:1870px;top:155.3px"><path d="M1 5.5 Q7.5 -1 14 5.5 Q7.5 12 1 5.5 Z" fill="none" stroke="#eee" stroke-width="1.5"/><circle cx="7.5" cy="5.5" r="2.4" fill="#eee"/></svg><svg width="14" height="12" viewBox="0 0 14 12" style="left:1891px;top:154.8px"><path d="M0.5 2.5 H4 L5 0.8 H9 L10 2.5 H13.5 V11.5 H0.5 Z" fill="#eee"/><circle cx="7" cy="6.8" r="3" fill="#282828"/><circle cx="7" cy="6.8" r="1.6" fill="#eee"/></svg><svg width="15" height="14" viewBox="0 0 15 14" style="left:1760px;top:153.8px"><path d="M2.5 2.5 H12.5 L7.5 11.5 Z" fill="none" stroke="#3ec59a" stroke-width="1.1"/><g fill="#282828" stroke="#3ec59a" stroke-width="1.1"><circle cx="2.5" cy="2.5" r="1.6"/><circle cx="12.5" cy="2.5" r="1.6"/><circle cx="7.5" cy="11.5" r="1.6"/></g></svg><svg width="6" height="9" style="left:1648px;top:176.3px" viewBox="0 0 6 9"><path d="M1 0.8 L5 4.5 L1 8.2" fill="none" stroke="#ccc" stroke-width="1.1"/></svg><svg width="15" height="14" viewBox="0 0 15 14" style="left:1662px;top:173.8px"><path d="M1.5 1.5 H13.5 L7.5 13 Z" fill="none" stroke="#e8963c" stroke-width="2.6" stroke-linejoin="round"/></svg><div class="a" style="left:1591px;top:178.8px;width:4px;height:4px;border-radius:50%;background:#ddd"></div><div class="t" style="left:1683px;top:173.8px;color:#e0e0e0">Plane.047</div><svg width="15" height="11" viewBox="0 0 15 11" style="left:1870px;top:175.3px"><path d="M1 5.5 Q7.5 -1 14 5.5 Q7.5 12 1 5.5 Z" fill="none" stroke="#eee" stroke-width="1.5"/><circle cx="7.5" cy="5.5" r="2.4" fill="#eee"/></svg><svg width="14" height="12" viewBox="0 0 14 12" style="left:1891px;top:174.8px"><path d="M0.5 2.5 H4 L5 0.8 H9 L10 2.5 H13.5 V11.5 H0.5 Z" fill="#eee"/><circle cx="7" cy="6.8" r="3" fill="#282828"/><circle cx="7" cy="6.8" r="1.6" fill="#eee"/></svg><svg width="14" height="14" viewBox="0 0 14 14" style="left:1759px;top:173.8px"><path d="M2 12.5 L7.5 7 M9 1.5 Q12 0.5 13 3 L10.5 4.5 L10.8 6 L12.5 5.2 Q12.5 8 9.5 8 L8 7.5 L3 12.8 Q2 13.5 1.3 12.5 Q0.7 11.8 1.5 11 L6.5 6 L6.2 4.5 Q6.3 2.3 9 1.5 Z" fill="none" stroke="#6a86d8" stroke-width="1.1" stroke-linejoin="round"/></svg><svg width="15" height="14" viewBox="0 0 15 14" style="left:1779px;top:173.8px"><path d="M2.5 2.5 H12.5 L7.5 11.5 Z" fill="none" stroke="#3ec59a" stroke-width="1.1"/><g fill="#282828" stroke="#3ec59a" stroke-width="1.1"><circle cx="2.5" cy="2.5" r="1.6"/><circle cx="12.5" cy="2.5" r="1.6"/><circle cx="7.5" cy="11.5" r="1.6"/></g></svg><svg width="6" height="9" style="left:1648px;top:196.3px" viewBox="0 0 6 9"><path d="M1 0.8 L5 4.5 L1 8.2" fill="none" stroke="#ccc" stroke-width="1.1"/></svg><svg width="15" height="14" viewBox="0 0 15 14" style="left:1662px;top:193.8px"><path d="M1.5 1.5 H13.5 L7.5 13 Z" fill="none" stroke="#e8963c" stroke-width="2.6" stroke-linejoin="round"/></svg><div class="a" style="left:1591px;top:198.8px;width:4px;height:4px;border-radius:50%;background:#ddd"></div><div class="t" style="left:1683px;top:193.8px;color:#e0e0e0">Plane.048</div><svg width="15" height="11" viewBox="0 0 15 11" style="left:1870px;top:195.3px"><path d="M1 5.5 Q7.5 -1 14 5.5 Q7.5 12 1 5.5 Z" fill="none" stroke="#eee" stroke-width="1.5"/><circle cx="7.5" cy="5.5" r="2.4" fill="#eee"/></svg><svg width="14" height="12" viewBox="0 0 14 12" style="left:1891px;top:194.8px"><path d="M0.5 2.5 H4 L5 0.8 H9 L10 2.5 H13.5 V11.5 H0.5 Z" fill="#eee"/><circle cx="7" cy="6.8" r="3" fill="#282828"/><circle cx="7" cy="6.8" r="1.6" fill="#eee"/></svg><svg width="14" height="14" viewBox="0 0 14 14" style="left:1759px;top:193.8px"><path d="M2 12.5 L7.5 7 M9 1.5 Q12 0.5 13 3 L10.5 4.5 L10.8 6 L12.5 5.2 Q12.5 8 9.5 8 L8 7.5 L3 12.8 Q2 13.5 1.3 12.5 Q0.7 11.8 1.5 11 L6.5 6 L6.2 4.5 Q6.3 2.3 9 1.5 Z" fill="none" stroke="#6a86d8" stroke-width="1.1" stroke-linejoin="round"/></svg><svg width="15" height="14" viewBox="0 0 15 14" style="left:1779px;top:193.8px"><path d="M2.5 2.5 H12.5 L7.5 11.5 Z" fill="none" stroke="#3ec59a" stroke-width="1.1"/><g fill="#282828" stroke="#3ec59a" stroke-width="1.1"><circle cx="2.5" cy="2.5" r="1.6"/><circle cx="12.5" cy="2.5" r="1.6"/><circle cx="7.5" cy="11.5" r="1.6"/></g></svg><svg width="6" height="9" style="left:1648px;top:216.3px" viewBox="0 0 6 9"><path d="M1 0.8 L5 4.5 L1 8.2" fill="none" stroke="#ccc" stroke-width="1.1"/></svg><svg width="15" height="14" viewBox="0 0 15 14" style="left:1662px;top:213.8px"><path d="M1.5 1.5 H13.5 L7.5 13 Z" fill="none" stroke="#e8963c" stroke-width="2.6" stroke-linejoin="round"/></svg><div class="a" style="left:1591px;top:218.8px;width:4px;height:4px;border-radius:50%;background:#ddd"></div><div class="t" style="left:1683px;top:213.8px;color:#e0e0e0">Plane.049</div><svg width="15" height="11" viewBox="0 0 15 11" style="left:1870px;top:215.3px"><path d="M1 5.5 Q7.5 -1 14 5.5 Q7.5 12 1 5.5 Z" fill="none" stroke="#eee" stroke-width="1.5"/><circle cx="7.5" cy="5.5" r="2.4" fill="#eee"/></svg><svg width="14" height="12" viewBox="0 0 14 12" style="left:1891px;top:214.8px"><path d="M0.5 2.5 H4 L5 0.8 H9 L10 2.5 H13.5 V11.5 H0.5 Z" fill="#eee"/><circle cx="7" cy="6.8" r="3" fill="#282828"/><circle cx="7" cy="6.8" r="1.6" fill="#eee"/></svg><svg width="14" height="14" viewBox="0 0 14 14" style="left:1759px;top:213.8px"><path d="M2 12.5 L7.5 7 M9 1.5 Q12 0.5 13 3 L10.5 4.5 L10.8 6 L12.5 5.2 Q12.5 8 9.5 8 L8 7.5 L3 12.8 Q2 13.5 1.3 12.5 Q0.7 11.8 1.5 11 L6.5 6 L6.2 4.5 Q6.3 2.3 9 1.5 Z" fill="none" stroke="#6a86d8" stroke-width="1.1" stroke-linejoin="round"/></svg><svg width="15" height="14" viewBox="0 0 15 14" style="left:1779px;top:213.8px"><path d="M2.5 2.5 H12.5 L7.5 11.5 Z" fill="none" stroke="#3ec59a" stroke-width="1.1"/><g fill="#282828" stroke="#3ec59a" stroke-width="1.1"><circle cx="2.5" cy="2.5" r="1.6"/><circle cx="12.5" cy="2.5" r="1.6"/><circle cx="7.5" cy="11.5" r="1.6"/></g></svg><svg width="6" height="9" style="left:1648px;top:236.3px" viewBox="0 0 6 9"><path d="M1 0.8 L5 4.5 L1 8.2" fill="none" stroke="#ccc" stroke-width="1.1"/></svg><svg width="15" height="14" viewBox="0 0 15 14" style="left:1662px;top:233.8px"><path d="M1.5 1.5 H13.5 L7.5 13 Z" fill="none" stroke="#e8963c" stroke-width="2.6" stroke-linejoin="round"/></svg><div class="a" style="left:1591px;top:238.8px;width:4px;height:4px;border-radius:50%;background:#ddd"></div><div class="t" style="left:1683px;top:233.8px;color:#e0e0e0">Plane.054</div><svg width="15" height="11" viewBox="0 0 15 11" style="left:1870px;top:235.3px"><path d="M1 5.5 Q7.5 -1 14 5.5 Q7.5 12 1 5.5 Z" fill="none" stroke="#eee" stroke-width="1.5"/><circle cx="7.5" cy="5.5" r="2.4" fill="#eee"/></svg><svg width="14" height="12" viewBox="0 0 14 12" style="left:1891px;top:234.8px"><path d="M0.5 2.5 H4 L5 0.8 H9 L10 2.5 H13.5 V11.5 H0.5 Z" fill="#eee"/><circle cx="7" cy="6.8" r="3" fill="#282828"/><circle cx="7" cy="6.8" r="1.6" fill="#eee"/></svg><svg width="14" height="14" viewBox="0 0 14 14" style="left:1759px;top:233.8px"><path d="M2 12.5 L7.5 7 M9 1.5 Q12 0.5 13 3 L10.5 4.5 L10.8 6 L12.5 5.2 Q12.5 8 9.5 8 L8 7.5 L3 12.8 Q2 13.5 1.3 12.5 Q0.7 11.8 1.5 11 L6.5 6 L6.2 4.5 Q6.3 2.3 9 1.5 Z" fill="none" stroke="#6a86d8" stroke-width="1.1" stroke-linejoin="round"/></svg><svg width="15" height="14" viewBox="0 0 15 14" style="left:1779px;top:233.8px"><path d="M2.5 2.5 H12.5 L7.5 11.5 Z" fill="none" stroke="#3ec59a" stroke-width="1.1"/><g fill="#282828" stroke="#3ec59a" stroke-width="1.1"><circle cx="2.5" cy="2.5" r="1.6"/><circle cx="12.5" cy="2.5" r="1.6"/><circle cx="7.5" cy="11.5" r="1.6"/></g></svg><svg width="6" height="9" style="left:1648px;top:256.3px" viewBox="0 0 6 9"><path d="M1 0.8 L5 4.5 L1 8.2" fill="none" stroke="#ccc" stroke-width="1.1"/></svg><div class="a" style="left:1659px;top:252px;width:20px;height:17px;background:#5470a0;border:1px solid #6f88b2;border-radius:4px"></div><svg width="15" height="14" viewBox="0 0 15 14" style="left:1662px;top:253.8px"><path d="M1.5 1.5 H13.5 L7.5 13 Z" fill="none" stroke="#e8963c" stroke-width="2.6" stroke-linejoin="round"/></svg><div class="t" style="left:1683px;top:253.8px;color:#f0ae3c">Plane.055</div><svg width="15" height="11" viewBox="0 0 15 11" style="left:1870px;top:255.3px"><path d="M1 5.5 Q7.5 -1 14 5.5 Q7.5 12 1 5.5 Z" fill="none" stroke="#eee" stroke-width="1.5"/><circle cx="7.5" cy="5.5" r="2.4" fill="#eee"/></svg><svg width="14" height="12" viewBox="0 0 14 12" style="left:1891px;top:254.8px"><path d="M0.5 2.5 H4 L5 0.8 H9 L10 2.5 H13.5 V11.5 H0.5 Z" fill="#eee"/><circle cx="7" cy="6.8" r="3" fill="#282828"/><circle cx="7" cy="6.8" r="1.6" fill="#eee"/></svg><div class="a" style="left:1778px;top:252px;width:18px;height:17px;background:#355f80;border:1px solid #4a8a9a;border-radius:4px"></div><svg width="14" height="14" viewBox="0 0 14 14" style="left:1759px;top:253.8px"><path d="M2 12.5 L7.5 7 M9 1.5 Q12 0.5 13 3 L10.5 4.5 L10.8 6 L12.5 5.2 Q12.5 8 9.5 8 L8 7.5 L3 12.8 Q2 13.5 1.3 12.5 Q0.7 11.8 1.5 11 L6.5 6 L6.2 4.5 Q6.3 2.3 9 1.5 Z" fill="none" stroke="#6a86d8" stroke-width="1.1" stroke-linejoin="round"/></svg><svg width="15" height="14" viewBox="0 0 15 14" style="left:1779px;top:253.8px"><path d="M2.5 2.5 H12.5 L7.5 11.5 Z" fill="none" stroke="#3ec59a" stroke-width="1.1"/><g fill="#282828" stroke="#3ec59a" stroke-width="1.1"><circle cx="2.5" cy="2.5" r="1.6"/><circle cx="12.5" cy="2.5" r="1.6"/><circle cx="7.5" cy="11.5" r="1.6"/></g></svg><svg width="9" height="6" style="left:1626px;top:277.8px" viewBox="0 0 9 6"><path d="M0.8 1 L4.5 5 L8.2 1" fill="none" stroke="#ccc" stroke-width="1.1"/></svg><svg width="14" height="13" viewBox="0 0 14 13" style="left:1640px;top:274.3px"><rect x="0.5" y="0.5" width="13" height="2.6" fill="#e0e0e0"/><path d="M1.5 4 H12.5 V12.5 H1.5 Z" fill="#e0e0e0"/><rect x="5" y="5.5" width="4" height="1.6" fill="#222"/></svg><div class="t" style="left:1663px;top:273.8px;color:#e0e0e0">Desk</div><svg width="11" height="11" viewBox="0 0 11 11" style="left:1852px;top:275.3px"><rect x="0" y="0" width="11" height="11" rx="1" fill="#e8e8e8"/><path d="M2.3 5.6 L4.5 7.8 L8.8 3" fill="none" stroke="#1a1a1a" stroke-width="1.6"/></svg><svg width="15" height="11" viewBox="0 0 15 11" style="left:1870px;top:275.3px"><path d="M1 5.5 Q7.5 -1 14 5.5 Q7.5 12 1 5.5 Z" fill="none" stroke="#eee" stroke-width="1.5"/><circle cx="7.5" cy="5.5" r="2.4" fill="#eee"/></svg><svg width="14" height="12" viewBox="0 0 14 12" style="left:1891px;top:274.8px"><path d="M0.5 2.5 H4 L5 0.8 H9 L10 2.5 H13.5 V11.5 H0.5 Z" fill="#eee"/><circle cx="7" cy="6.8" r="3" fill="#282828"/><circle cx="7" cy="6.8" r="1.6" fill="#eee"/></svg><svg width="6" height="9" style="left:1648px;top:296.3px" viewBox="0 0 6 9"><path d="M1 0.8 L5 4.5 L1 8.2" fill="none" stroke="#ccc" stroke-width="1.1"/></svg><svg width="15" height="14" viewBox="0 0 15 14" style="left:1662px;top:293.8px"><path d="M1.5 1.5 H13.5 L7.5 13 Z" fill="none" stroke="#e8963c" stroke-width="2.6" stroke-linejoin="round"/></svg><div class="a" style="left:1591px;top:298.8px;width:4px;height:4px;border-radius:50%;background:#ddd"></div><div class="t" style="left:1683px;top:293.8px;color:#e0e0e0">Plane.045</div><svg width="15" height="11" viewBox="0 0 15 11" style="left:1870px;top:295.3px"><path d="M1 5.5 Q7.5 -1 14 5.5 Q7.5 12 1 5.5 Z" fill="none" stroke="#eee" stroke-width="1.5"/><circle cx="7.5" cy="5.5" r="2.4" fill="#eee"/></svg><svg width="14" height="12" viewBox="0 0 14 12" style="left:1891px;top:294.8px"><path d="M0.5 2.5 H4 L5 0.8 H9 L10 2.5 H13.5 V11.5 H0.5 Z" fill="#eee"/><circle cx="7" cy="6.8" r="3" fill="#282828"/><circle cx="7" cy="6.8" r="1.6" fill="#eee"/></svg><svg width="15" height="14" viewBox="0 0 15 14" style="left:1760px;top:293.8px"><path d="M2.5 2.5 H12.5 L7.5 11.5 Z" fill="none" stroke="#3ec59a" stroke-width="1.1"/><g fill="#282828" stroke="#3ec59a" stroke-width="1.1"><circle cx="2.5" cy="2.5" r="1.6"/><circle cx="12.5" cy="2.5" r="1.6"/><circle cx="7.5" cy="11.5" r="1.6"/></g></svg><svg width="14" height="13" viewBox="0 0 14 13" style="left:1640px;top:314.3px"><rect x="0.5" y="0.5" width="13" height="2.6" fill="#e0e0e0"/><path d="M1.5 4 H12.5 V12.5 H1.5 Z" fill="#e0e0e0"/><rect x="5" y="5.5" width="4" height="1.6" fill="#222"/></svg><div class="t" style="left:1663px;top:313.8px;color:#e0e0e0">Kitchen</div><svg width="11" height="11" viewBox="0 0 11 11" style="left:1852px;top:315.3px"><rect x="0" y="0" width="11" height="11" rx="1" fill="#e8e8e8"/><path d="M2.3 5.6 L4.5 7.8 L8.8 3" fill="none" stroke="#1a1a1a" stroke-width="1.6"/></svg><svg width="15" height="11" viewBox="0 0 15 11" style="left:1870px;top:315.3px"><path d="M1 5.5 Q7.5 -1 14 5.5 Q7.5 12 1 5.5 Z" fill="none" stroke="#eee" stroke-width="1.5"/><circle cx="7.5" cy="5.5" r="2.4" fill="#eee"/></svg><svg width="14" height="12" viewBox="0 0 14 12" style="left:1891px;top:314.8px"><path d="M0.5 2.5 H4 L5 0.8 H9 L10 2.5 H13.5 V11.5 H0.5 Z" fill="#eee"/><circle cx="7" cy="6.8" r="3" fill="#282828"/><circle cx="7" cy="6.8" r="1.6" fill="#eee"/></svg><svg width="9" height="6" style="left:1626px;top:337.8px" viewBox="0 0 9 6"><path d="M0.8 1 L4.5 5 L8.2 1" fill="none" stroke="#ccc" stroke-width="1.1"/></svg><svg width="14" height="13" viewBox="0 0 14 13" style="left:1640px;top:334.3px"><rect x="0.5" y="0.5" width="13" height="2.6" fill="#e0e0e0"/><path d="M1.5 4 H12.5 V12.5 H1.5 Z" fill="#e0e0e0"/><rect x="5" y="5.5" width="4" height="1.6" fill="#222"/></svg><div class="t" style="left:1663px;top:333.8px;color:#e0e0e0">Bookcase</div><svg width="11" height="11" viewBox="0 0 11 11" style="left:1852px;top:335.3px"><rect x="0" y="0" width="11" height="11" rx="1" fill="#e8e8e8"/><path d="M2.3 5.6 L4.5 7.8 L8.8 3" fill="none" stroke="#1a1a1a" stroke-width="1.6"/></svg><svg width="15" height="11" viewBox="0 0 15 11" style="left:1870px;top:335.3px"><path d="M1 5.5 Q7.5 -1 14 5.5 Q7.5 12 1 5.5 Z" fill="none" stroke="#eee" stroke-width="1.5"/><circle cx="7.5" cy="5.5" r="2.4" fill="#eee"/></svg><svg width="14" height="12" viewBox="0 0 14 12" style="left:1891px;top:334.8px"><path d="M0.5 2.5 H4 L5 0.8 H9 L10 2.5 H13.5 V11.5 H0.5 Z" fill="#eee"/><circle cx="7" cy="6.8" r="3" fill="#282828"/><circle cx="7" cy="6.8" r="1.6" fill="#eee"/></svg><svg width="6" height="9" style="left:1648px;top:356.3px" viewBox="0 0 6 9"><path d="M1 0.8 L5 4.5 L1 8.2" fill="none" stroke="#ccc" stroke-width="1.1"/></svg><svg width="15" height="14" viewBox="0 0 15 14" style="left:1662px;top:353.8px"><path d="M1.5 1.5 H13.5 L7.5 13 Z" fill="none" stroke="#e8963c" stroke-width="2.6" stroke-linejoin="round"/></svg><div class="a" style="left:1591px;top:358.8px;width:4px;height:4px;border-radius:50%;background:#ddd"></div><div class="t" style="left:1683px;top:353.8px;color:#e0e0e0">Plane.046</div><svg width="15" height="11" viewBox="0 0 15 11" style="left:1870px;top:355.3px"><path d="M1 5.5 Q7.5 -1 14 5.5 Q7.5 12 1 5.5 Z" fill="none" stroke="#eee" stroke-width="1.5"/><circle cx="7.5" cy="5.5" r="2.4" fill="#eee"/></svg><svg width="14" height="12" viewBox="0 0 14 12" style="left:1891px;top:354.8px"><path d="M0.5 2.5 H4 L5 0.8 H9 L10 2.5 H13.5 V11.5 H0.5 Z" fill="#eee"/><circle cx="7" cy="6.8" r="3" fill="#282828"/><circle cx="7" cy="6.8" r="1.6" fill="#eee"/></svg><svg width="15" height="14" viewBox="0 0 15 14" style="left:1760px;top:353.8px"><path d="M2.5 2.5 H12.5 L7.5 11.5 Z" fill="none" stroke="#3ec59a" stroke-width="1.1"/><g fill="#282828" stroke="#3ec59a" stroke-width="1.1"><circle cx="2.5" cy="2.5" r="1.6"/><circle cx="12.5" cy="2.5" r="1.6"/><circle cx="7.5" cy="11.5" r="1.6"/></g></svg><svg width="14" height="13" viewBox="0 0 14 13" style="left:1640px;top:374.3px"><rect x="0.5" y="0.5" width="13" height="2.6" fill="#e0e0e0"/><path d="M1.5 4 H12.5 V12.5 H1.5 Z" fill="#e0e0e0"/><rect x="5" y="5.5" width="4" height="1.6" fill="#222"/></svg><div class="t" style="left:1663px;top:373.8px;color:#e0e0e0">Character</div><svg width="11" height="11" viewBox="0 0 11 11" style="left:1852px;top:375.3px"><rect x="0" y="0" width="11" height="11" rx="1" fill="#e8e8e8"/><path d="M2.3 5.6 L4.5 7.8 L8.8 3" fill="none" stroke="#1a1a1a" stroke-width="1.6"/></svg><svg width="15" height="11" viewBox="0 0 15 11" style="left:1870px;top:375.3px"><path d="M1 5.5 Q7.5 -1 14 5.5 Q7.5 12 1 5.5 Z" fill="none" stroke="#eee" stroke-width="1.5"/><circle cx="7.5" cy="5.5" r="2.4" fill="#eee"/></svg><svg width="14" height="12" viewBox="0 0 14 12" style="left:1891px;top:374.8px"><path d="M0.5 2.5 H4 L5 0.8 H9 L10 2.5 H13.5 V11.5 H0.5 Z" fill="#eee"/><circle cx="7" cy="6.8" r="3" fill="#282828"/><circle cx="7" cy="6.8" r="1.6" fill="#eee"/></svg><svg width="14" height="13" viewBox="0 0 14 13" style="left:1640px;top:394.3px"><rect x="0.5" y="0.5" width="13" height="2.6" fill="#e0e0e0"/><path d="M1.5 4 H12.5 V12.5 H1.5 Z" fill="#e0e0e0"/><rect x="5" y="5.5" width="4" height="1.6" fill="#222"/></svg><div class="t" style="left:1663px;top:393.8px;color:#e0e0e0">ETC</div><svg width="11" height="11" viewBox="0 0 11 11" style="left:1852px;top:395.3px"><rect x="0" y="0" width="11" height="11" rx="1" fill="#e8e8e8"/><path d="M2.3 5.6 L4.5 7.8 L8.8 3" fill="none" stroke="#1a1a1a" stroke-width="1.6"/></svg><svg width="15" height="11" viewBox="0 0 15 11" style="left:1870px;top:395.3px"><path d="M1 5.5 Q7.5 -1 14 5.5 Q7.5 12 1 5.5 Z" fill="none" stroke="#eee" stroke-width="1.5"/><circle cx="7.5" cy="5.5" r="2.4" fill="#eee"/></svg><svg width="14" height="12" viewBox="0 0 14 12" style="left:1891px;top:394.8px"><path d="M0.5 2.5 H4 L5 0.8 H9 L10 2.5 H13.5 V11.5 H0.5 Z" fill="#eee"/><circle cx="7" cy="6.8" r="3" fill="#282828"/><circle cx="7" cy="6.8" r="1.6" fill="#eee"/></svg><svg width="14" height="13" viewBox="0 0 14 13" style="left:1621px;top:414.3px"><rect x="0.5" y="0.5" width="13" height="2.6" fill="#e0e0e0"/><path d="M1.5 4 H12.5 V12.5 H1.5 Z" fill="#e0e0e0"/><rect x="5" y="5.5" width="4" height="1.6" fill="#222"/></svg><div class="t" style="left:1643px;top:413.8px;color:#e0e0e0">Background</div><svg width="11" height="11" viewBox="0 0 11 11" style="left:1852px;top:415.3px"><rect x="0" y="0" width="11" height="11" rx="1" fill="#e8e8e8"/><path d="M2.3 5.6 L4.5 7.8 L8.8 3" fill="none" stroke="#1a1a1a" stroke-width="1.6"/></svg><svg width="15" height="11" viewBox="0 0 15 11" style="left:1870px;top:415.3px"><path d="M1 5.5 Q7.5 -1 14 5.5 Q7.5 12 1 5.5 Z" fill="none" stroke="#eee" stroke-width="1.5"/><circle cx="7.5" cy="5.5" r="2.4" fill="#eee"/></svg><svg width="14" height="12" viewBox="0 0 14 12" style="left:1891px;top:414.8px"><path d="M0.5 2.5 H4 L5 0.8 H9 L10 2.5 H13.5 V11.5 H0.5 Z" fill="#eee"/><circle cx="7" cy="6.8" r="3" fill="#282828"/><circle cx="7" cy="6.8" r="1.6" fill="#eee"/></svg><svg width="14" height="13" viewBox="0 0 14 13" style="left:1621px;top:434.3px"><rect x="0.5" y="0.5" width="13" height="2.6" fill="#777"/><path d="M1.5 4 H12.5 V12.5 H1.5 Z" fill="#777"/><rect x="5" y="5.5" width="4" height="1.6" fill="#222"/></svg><div class="t" style="left:1643px;top:433.8px;color:#707070">Backup</div><svg width="11" height="11" viewBox="0 0 11 11" style="left:1852px;top:435.3px"><rect x="0.6" y="0.6" width="9.8" height="9.8" rx="1" fill="none" stroke="#ddd" stroke-width="1.1"/></svg><svg width="14" height="12" viewBox="0 0 14 12" style="left:1891px;top:434.8px"><path d="M0.5 2.5 H4 L5 0.8 H9 L10 2.5 H13.5 V11.5 H0.5 Z" fill="#555"/><circle cx="7" cy="6.8" r="3" fill="#282828"/><circle cx="7" cy="6.8" r="1.6" fill="#555"/></svg>


<!-- PROPERTIES -->
<div class="a" style="left:1578px;top:448px;width:334px;height:535px;border-radius:6px;overflow:hidden;background:#303030">
  <div class="a" style="left:1px;top:26px;width:28px;height:509px;background:#1a1a1a"></div>
  <div class="a" style="left:1px;top:26px;width:28px;height:36px;background:#1f1f1f"></div>
  <div class="a" style="left:1px;top:66px;width:28px;height:144px;background:#1f1f1f"></div>
  <div class="a" style="left:1px;top:217px;width:28px;height:233px;background:#1f1f1f"></div>
  <div class="a" style="left:3px;top:283px;width:26px;height:26px;background:#303030;border-radius:4px 0 0 4px"></div>
</div>
<div class="a" style="left:1589px;top:451px;width:31px;height:19px;background:#232323;border:1px solid #303030;border-radius:4px"></div>
<svg width="16" height="16" viewBox="0 0 16 16" style="left:1591px;top:453px"><rect x="1" y="1.5" width="11" height="5.5" rx="2.75" fill="#eee"/><rect x="7" y="2.7" width="3.8" height="3.1" rx="1.5" fill="#232323"/><rect x="1" y="9" width="11" height="5.5" rx="2.75" fill="#eee"/><rect x="7" y="10.2" width="3.8" height="3.1" rx="1.5" fill="#232323"/></svg>
<svg width="8" height="6" style="left:1609px;top:458px" viewBox="0 0 8 6"><path d="M1 1.3 L4 4.3 L7 1.3" fill="none" stroke="#ddd" stroke-width="1.2"/></svg>
<div class="tf" style="left:1690px;top:451px;width:117px;height:18px;border-radius:4px"></div>
<svg width="14" height="14" viewBox="0 0 14 14" style="left:1694px;top:453px"><circle cx="5.5" cy="5.5" r="4.3" fill="none" stroke="#ddd" stroke-width="1.2"/><path d="M8.6 8.6 L13 13" stroke="#ddd" stroke-width="1.4"/></svg>
<div class="t" style="left:1715px;top:453px;color:#6e6e6e">Search</div>
<div class="a" style="left:1890px;top:451px;width:19px;height:19px;background:#232323;border:1px solid #303030;border-radius:4px"></div>
<svg width="8" height="6" style="left:1895px;top:458px" viewBox="0 0 8 6"><path d="M1 1.3 L4 4.3 L7 1.3" fill="none" stroke="#ddd" stroke-width="1.2"/></svg>
<svg width="16" height="16" viewBox="0 0 16 16" style="left:1586px;top:487.6px"><path d="M4 1 V7" stroke="#ddd" stroke-width="1.1"/><circle cx="4" cy="11" r="2.8" fill="#ddd"/><path d="M10.5 15 V7.5 M8 2 Q8 6 10.5 6 Q13 6 13 2" fill="none" stroke="#ddd" stroke-width="2"/></svg><svg width="16" height="16" viewBox="0 0 16 16" style="left:1586px;top:522.6px"><rect x="1" y="4" width="13.5" height="10" rx="1" fill="none" stroke="#ddd" stroke-width="1.3"/><path d="M4 4 V2.5 H8 V4 M3.5 7.5 H9 M3.5 10 H9" stroke="#ddd" stroke-width="1.1" fill="none"/><circle cx="12" cy="9" r="1.2" fill="#ddd"/></svg><svg width="16" height="16" viewBox="0 0 16 16" style="left:1586px;top:551px"><path d="M1 2 H15 V7 H1 Z" fill="#ddd"/><path d="M3 7 V14.5 H13 V7" fill="none" stroke="#ddd" stroke-width="1.2"/><path d="M4.5 13 L7 9.5 L9 11.5 L11.5 9 V13 Z" fill="#ddd"/></svg><svg width="16" height="16" viewBox="0 0 16 16" style="left:1586px;top:579.8px"><path d="M5 1.5 H14.5 V10.5 H5 Z" fill="none" stroke="#ddd" stroke-width="1.1"/><path d="M3 3.5 V12.5 H12.5 M1 5.5 V14.5 H10.5" fill="none" stroke="#ddd" stroke-width="1"/><path d="M6 9.5 L9 5 L11 7.5 L12 6.5 L14 9.5 Z" fill="#eee"/></svg><svg width="16" height="16" viewBox="0 0 16 16" style="left:1586px;top:608.5px"><path d="M5 2 L8.5 9.5 Q8 13 5 13 Q1.5 13 1.5 9.5 Z" fill="#ddd"/><circle cx="12.5" cy="3.5" r="1.8" fill="#ddd"/><circle cx="10.5" cy="11" r="3.6" fill="#1f1f1f" stroke="#ddd" stroke-width="1.2"/></svg><svg width="16" height="16" viewBox="0 0 16 16" style="left:1586px;top:636px"><circle cx="8" cy="8" r="5.8" fill="none" stroke="#c0505e" stroke-width="1.3"/><path d="M3.5 5 Q6.5 5 6.5 8 Q9 9 8 12.5 Q5 12 3.5 9 Z M9.5 3 Q11 5.5 13 6.5 Q13.5 4 11 2.7 Z" fill="#c0505e"/><path d="M1.5 14.5 L14.5 1.5" stroke="#c0505e" stroke-width="1.1"/></svg><svg width="16" height="16" viewBox="0 0 16 16" style="left:1586px;top:671.4px"><rect x="1.5" y="1.5" width="13" height="3" fill="#eee"/><path d="M2.5 5.5 H13.5 V14.5 H2.5 Z" fill="none" stroke="#eee" stroke-width="1.3"/><rect x="6" y="7" width="4" height="1.5" fill="#eee"/></svg><svg width="16" height="16" viewBox="0 0 16 16" style="left:1586px;top:708px"><path d="M1 4 V1 H4 M12 1 H15 V4 M15 12 V15 H12 M4 15 H1 V12" fill="none" stroke="#999" stroke-width="1"/><rect x="3.5" y="3.5" width="9" height="9" fill="#e0944a"/></svg><svg width="16" height="16" viewBox="0 0 16 16" style="left:1586px;top:735.5px"><path d="M2.5 14 L8 8.5 M10 1.5 Q14 0.5 14.5 4 L11.5 5.5 L12 7 L14.5 6 Q14.5 9.5 10.5 9.5 L9 9 L3.5 14.5 Q2.5 15.5 1.5 14.5 Q0.5 13.5 1.5 12.5 L7 7 L6.8 5.5 Q6.8 2.5 10 1.5 Z" fill="#6d92e8"/></svg><svg width="16" height="16" viewBox="0 0 16 16" style="left:1586px;top:764px"><circle cx="3" cy="3" r="2" fill="#6d92e8"/><circle cx="3" cy="13" r="1.6" fill="#6d92e8"/><circle cx="13" cy="13" r="1.8" fill="#6d92e8"/><circle cx="13" cy="4" r="1.3" fill="#6d92e8"/><path d="M3 3 V13 M3 3 L13 13 M3 3 L13 4" stroke="#6d92e8" stroke-width="1.1"/></svg><svg width="16" height="16" viewBox="0 0 16 16" style="left:1586px;top:791.5px"><circle cx="7" cy="9" r="6" fill="none" stroke="#6d92e8" stroke-width="1.2" stroke-dasharray="26 8"/><circle cx="7" cy="9" r="2.5" fill="#6d92e8"/><circle cx="12.5" cy="3.5" r="1.8" fill="#6d92e8"/></svg><svg width="16" height="16" viewBox="0 0 16 16" style="left:1586px;top:818.8px"><path d="M3 13 Q0 10 3 7 L9 2 Q12 0 14 2.5 Q15.5 5 13 7.5 L8 13 Q5.5 15.5 3 13 Z" fill="none" stroke="#6d92e8" stroke-width="1.2"/><circle cx="6" cy="10" r="2.6" fill="none" stroke="#6d92e8" stroke-width="1.2"/><circle cx="6" cy="10" r="0.9" fill="#6d92e8"/></svg><svg width="16" height="16" viewBox="0 0 16 16" style="left:1586px;top:846px"><path d="M2.5 2.5 H13.5 L8 13 Z" fill="none" stroke="#3ec59a" stroke-width="1.3"/><g fill="#1f1f1f" stroke="#3ec59a" stroke-width="1.2"><rect x="0.8" y="0.8" width="3.4" height="3.4"/><rect x="11.8" y="0.8" width="3.4" height="3.4"/><rect x="6.3" y="11.3" width="3.4" height="3.4"/></g></svg><svg width="16" height="16" viewBox="0 0 16 16" style="left:1586px;top:874.8px"><circle cx="8" cy="8" r="6.5" fill="#d8606c"/><path d="M8 1.5 A6.5 6.5 0 0 0 1.5 8 H8 Z" fill="#f2c6cc"/><path d="M8 8 H14.5 A6.5 6.5 0 0 1 8 14.5 Z" fill="#2a1a1c"/></svg><svg width="10" height="6" style="left:1589px;top:912.0px" viewBox="0 0 10 6"><path d="M1 1 L5 5 L9 1" fill="none" stroke="#555" stroke-width="1.1"/></svg><svg width="15" height="15" viewBox="0 0 15 15" style="left:1617px;top:484px"><path d="M1 4 V1 H4 M11 1 H14 V4 M14 11 V14 H11 M4 14 H1 V11" fill="none" stroke="#bbb" stroke-width="1"/><rect x="3.5" y="3.5" width="8" height="8" fill="#eee"/></svg><div class="t" style="left:1641px;top:485px;">Plane.055</div><svg width="6" height="10" style="left:1711px;top:487.0px" viewBox="0 0 6 10"><path d="M1 1 L5 5 L1 9" fill="none" stroke="#ccc" stroke-width="1.1"/></svg><svg width="16" height="16" viewBox="0 0 16 16" style="left:1724px;top:484px"><path d="M7 3 Q2 0 1.5 4 Q1 7 4.5 8 Q1 9.5 2 12.5 Q3 15 7 13 M9 3 Q14 0 14.5 4 Q15 7 11.5 8 Q15 9.5 14 12.5 Q13 15 9 13" fill="none" stroke="#ccc" stroke-width="1"/><path d="M8 1 V15" stroke="#fff" stroke-width="1" stroke-dasharray="1.5 1"/></svg><div class="t" style="left:1749px;top:485px;">Mirror</div><svg width="16" height="16" viewBox="0 0 16 16" style="left:1891px;top:484px"><path d="M9.5 1.5 L14.5 6.5 M11 3 L8 6.5 L4.5 7 L9 11.5 L9.5 8 L13 5 M6.8 9.2 L1.5 14.5" fill="none" stroke="#999" stroke-width="1.1"/></svg><div class="num" style="left:1616px;top:519px;width:292px;height:38px;background:#4a4a4a"></div><div class="a" style="left:1761px;top:519px;width:1px;height:38px;background:#363636"></div><div class="a" style="left:1616px;top:537.5px;width:292px;height:1px;background:#363636"></div><svg width="14" height="14" viewBox="0 0 14 14" style="left:1620px;top:521px"><path d="M7 1 V9 M4 6 L7 9 L10 6 M1 9 V12.5 H13 V9" fill="none" stroke="#ddd" stroke-width="1.1"/></svg><div class="t c" style="left:1636px;width:125px;top:521px;">Apply All</div><svg width="12" height="12" viewBox="0 0 12 12" style="left:1767px;top:522px"><path d="M2 2 L10 10 M10 2 L2 10" stroke="#ddd" stroke-width="1.1"/></svg><div class="t c" style="left:1781px;width:125px;top:521px;">Delete All</div><svg width="14" height="14" viewBox="0 0 14 14" style="left:1620px;top:540px"><rect x="1" y="1.5" width="12" height="8" fill="none" stroke="#ddd" stroke-width="1.2"/><path d="M7 9.5 V12 M4 12.5 H10" stroke="#ddd" stroke-width="1.1"/></svg><div class="t c" style="left:1636px;width:125px;top:540px;">Viewport Vis</div><svg width="16" height="16" viewBox="0 0 16 16" style="left:1765px;top:539px"><path d="M9 1.5 H14.5 V7 M14.5 1.5 L9 7 M7 14.5 H1.5 V9 M1.5 14.5 L7 9 M1.5 5 V1.5 H5 M14.5 11 V14.5 H11" fill="none" stroke="#ddd" stroke-width="1"/></svg><div class="t c" style="left:1781px;width:125px;top:540px;">Toggle Stack</div><div class="num" style="left:1616px;top:564px;width:292px;height:19px;background:#4a4a4a"></div><div class="t" style="left:1620px;top:563px;font-size:16px;line-height:18px;color:#ddd">+</div><div class="t c" style="left:1616px;width:308px;top:567px;">Add Modifier</div><div class="a" style="left:1615px;top:593px;width:294px;height:369px;background:#383838;border-radius:5px"></div><svg width="10" height="6" style="left:1624px;top:603.0px" viewBox="0 0 10 6"><path d="M1 1 L5 5 L9 1" fill="none" stroke="#ccc" stroke-width="1.1"/></svg><svg width="16" height="16" viewBox="0 0 16 16" style="left:1637px;top:598px"><path d="M2 6 L5 3 H14 V11 L11 14 H2 Z M2 6 H11 V14 M11 6 L14 3" fill="none" stroke="#ddd" stroke-width="1"/></svg><div class="tf" style="left:1663px;top:597px;width:95px;height:18px;border-radius:3px 0 0 3px"></div><div class="t" style="left:1671px;top:599px;">Solidify</div><div class="a" style="left:1758px;top:597px;width:21px;height:18px;background:#505050"></div><svg width="14" height="14" viewBox="0 0 14 14" style="left:1761px;top:599px"><path d="M2 2 H12 L7 12 Z" fill="none" stroke="#ddd" stroke-width="1.1"/><g fill="#505050" stroke="#ddd" stroke-width="1"><circle cx="2" cy="2" r="1.4"/><circle cx="12" cy="2" r="1.4"/><circle cx="7" cy="12" r="1.4"/></g></svg><div class="a blue" style="left:1779px;top:597px;width:59px;height:18px"></div><div class="a" style="left:1798.5px;top:597px;width:1px;height:18px;background:#3a5f96"></div><div class="a" style="left:1818.5px;top:597px;width:1px;height:18px;background:#3a5f96"></div><svg width="14" height="14" viewBox="0 0 14 14" style="left:1782px;top:599px"><g fill="none" stroke="#eee" stroke-width="1"><rect x="1" y="2" width="2.5" height="2.5"/><rect x="1" y="10.5" width="2.5" height="2.5"/><rect x="10.5" y="10.5" width="2.5" height="2.5"/><path d="M2.25 4.5 V10.5 M3.5 11.75 H10.5 M3.5 3.25 H8.5 M11.75 6 V10.5"/></g><rect x="9.5" y="1" width="4" height="4" fill="#fff"/></svg><svg width="14" height="14" viewBox="0 0 14 14" style="left:1802px;top:599px"><rect x="1.5" y="2" width="11" height="7.5" fill="none" stroke="#eee" stroke-width="1.3"/><path d="M7 9.5 V12 M4 12.5 H10" stroke="#eee" stroke-width="1.2"/></svg><svg width="14" height="14" viewBox="0 0 14 14" style="left:1822px;top:599px"><path d="M0.5 3.5 H4 L5 1.8 H9 L10 3.5 H13.5 V12.5 H0.5 Z" fill="#eee"/><circle cx="7" cy="7.8" r="3" fill="#4772b3"/><circle cx="7" cy="7.8" r="1.6" fill="#eee"/></svg><div class="a" style="left:1838px;top:597px;width:19px;height:18px;background:#262626;border-radius:0 3px 3px 0"></div><svg width="10" height="6" style="left:1843px;top:603.0px" viewBox="0 0 10 6"><path d="M1 1 L5 5 L9 1" fill="none" stroke="#ddd" stroke-width="1.1"/></svg><svg width="12" height="12" viewBox="0 0 12 12" style="left:1863px;top:600px"><path d="M2 2 L10 10 M10 2 L2 10" stroke="#ddd" stroke-width="1.2"/></svg><svg width="12" height="6" style="left:1888px;top:604px" viewBox="0 0 12 6"><g fill="#777"><rect x="0" y="0" width="1.2" height="1.2"/><rect x="3.5" y="0" width="1.2" height="1.2"/><rect x="7" y="0" width="1.2" height="1.2"/><rect x="10.5" y="0" width="1.2" height="1.2"/><rect x="0" y="3.5" width="1.2" height="1.2"/><rect x="3.5" y="3.5" width="1.2" height="1.2"/><rect x="7" y="3.5" width="1.2" height="1.2"/><rect x="10.5" y="3.5" width="1.2" height="1.2"/></g></svg><div class="t r" style="left:0;width:1722px;top:629px;">Mode</div><div class="mn" style="left:1732px;top:627px;width:148px;height:18px;background:#262626"></div><div class="t" style="left:1739px;top:629px;">Simple</div><svg width="10" height="6" style="left:1868px;top:633.0px" viewBox="0 0 10 6"><path d="M1 1 L5 5 L9 1" fill="none" stroke="#ddd" stroke-width="1.1"/></svg><div class="a" style="left:1889px;top:634px;width:4px;height:4px;border-radius:50%;background:#ddd"></div><div class="t r" style="left:0;width:1722px;top:654px;">Thickness</div><div class="num" style="left:1732px;top:652px;width:148px;height:18px;background:#505050"></div><div class="t c" style="left:1732px;width:148px;top:654px;">0.04 m</div><div class="a" style="left:1889px;top:659px;width:4px;height:4px;border-radius:50%;background:#ddd"></div><div class="t r" style="left:0;width:1722px;top:679px;">Offset</div><div class="num" style="left:1732px;top:677px;width:148px;height:18px;background:#505050"></div><div class="t c" style="left:1732px;width:148px;top:679px;">-1.0000</div><div class="a" style="left:1889px;top:684px;width:4px;height:4px;border-radius:50%;background:#ddd"></div><div class="chk" style="left:1732px;top:705px;background:#4a4a4a"></div><div class="t" style="left:1748px;top:704px;">Even Thickness</div><div class="a" style="left:1889px;top:709px;width:4px;height:4px;border-radius:50%;background:#ddd"></div><div class="t r" style="left:0;width:1722px;top:729px;">Rim</div><div class="chk on" style="left:1732px;top:730px"><svg width="12" height="12" style="left:0;top:0" viewBox="0 0 12 12"><path d="M2.5 6.2 L5 8.7 L9.8 3.3" fill="none" stroke="#fff" stroke-width="1.6"/></svg></div><div class="t" style="left:1748px;top:729px;">Fill</div><div class="a" style="left:1889px;top:734px;width:4px;height:4px;border-radius:50%;background:#ddd"></div><div class="chk" style="left:1732px;top:752px;background:#4a4a4a"></div><div class="t" style="left:1748px;top:751px;">Only Rim</div><div class="a" style="left:1889px;top:756px;width:4px;height:4px;border-radius:50%;background:#ddd"></div><div class="t r" style="left:0;width:1722px;top:787px;">Vertex Group</div><div class="tf" style="left:1732px;top:785px;width:128px;height:18px;border-radius:3px 0 0 3px"></div><svg width="14" height="14" viewBox="0 0 14 14" style="left:1735px;top:787px"><g fill="#eee"><rect x="1" y="4" width="3.5" height="3.5"/><rect x="5" y="8" width="3.5" height="3.5"/><rect x="1" y="8" width="3.5" height="3.5"/><rect x="5" y="0" width="3.5" height="3.5"/></g><g fill="none" stroke="#eee" stroke-width="0.9"><rect x="5.5" y="4.5" width="2.5" height="2.5"/><rect x="9.5" y="4.5" width="2.5" height="2.5"/><rect x="9.5" y="8.5" width="2.5" height="2.5"/><rect x="9.5" y="0.5" width="2.5" height="2.5"/></g></svg><div class="a" style="left:1860px;top:785px;width:20px;height:18px;background:#404040;border-radius:0 3px 3px 0"></div><svg width="14" height="10" viewBox="0 0 14 10" style="left:1863px;top:789px"><path d="M1 5 H13 M4 2 L1 5 L4 8 M10 2 L13 5 L10 8" fill="none" stroke="#777" stroke-width="1"/></svg><div class="t r" style="left:0;width:1722px;top:812px;color:#777">Factor</div><div class="num" style="left:1732px;top:810px;width:148px;height:18px;background:#3f3f3f"></div><div class="t c" style="left:1732px;width:148px;top:812px;color:#7a7a7a">0.000</div><div class="a" style="left:1889px;top:817px;width:4px;height:4px;border-radius:50%;background:#555"></div><svg width="6" height="10" style="left:1640px;top:845.0px" viewBox="0 0 6 10"><path d="M1 1 L5 5 L1 9" fill="none" stroke="#ccc" stroke-width="1.1"/></svg><div class="t" style="left:1651px;top:843px;">Normals</div><svg width="6" height="10" style="left:1640px;top:870.0px" viewBox="0 0 6 10"><path d="M1 1 L5 5 L1 9" fill="none" stroke="#ccc" stroke-width="1.1"/></svg><div class="t" style="left:1651px;top:868px;">Materials</div><svg width="6" height="10" style="left:1640px;top:895.0px" viewBox="0 0 6 10"><path d="M1 1 L5 5 L1 9" fill="none" stroke="#ccc" stroke-width="1.1"/></svg><div class="t" style="left:1651px;top:893px;">Edge Data</div><svg width="6" height="10" style="left:1640px;top:920.0px" viewBox="0 0 6 10"><path d="M1 1 L5 5 L1 9" fill="none" stroke="#ccc" stroke-width="1.1"/></svg><div class="t" style="left:1651px;top:918px;">Thickness Clamp</div><svg width="6" height="10" style="left:1640px;top:945.0px" viewBox="0 0 6 10"><path d="M1 1 L5 5 L1 9" fill="none" stroke="#ccc" stroke-width="1.1"/></svg><div class="t" style="left:1651px;top:943px;">Output Vertex Groups</div><div class="a" style="left:1615px;top:965px;width:294px;height:30px;background:#383838;border-radius:5px;border:1px solid #4f72b0"></div><svg width="10" height="6" style="left:1624px;top:974.0px" viewBox="0 0 10 6"><path d="M1 1 L5 5 L9 1" fill="none" stroke="#ccc" stroke-width="1.1"/></svg><svg width="16" height="16" viewBox="0 0 16 16" style="left:1637px;top:969px"><path d="M7 3 Q2 0 1.5 4 Q1 7 4.5 8 Q1 9.5 2 12.5 Q3 15 7 13 M9 3 Q14 0 14.5 4 Q15 7 11.5 8 Q15 9.5 14 12.5 Q13 15 9 13" fill="none" stroke="#ccc" stroke-width="1"/><path d="M8 1 V15" stroke="#fff" stroke-width="1" stroke-dasharray="1.5 1"/></svg><div class="tf" style="left:1663px;top:968px;width:95px;height:18px;border-radius:3px 0 0 3px"></div><div class="t" style="left:1671px;top:970px;">Mirror</div><div class="a" style="left:1758px;top:968px;width:21px;height:18px;background:#505050"></div><svg width="14" height="14" viewBox="0 0 14 14" style="left:1761px;top:970px"><path d="M2 2 H12 L7 12 Z" fill="none" stroke="#ddd" stroke-width="1.1"/><g fill="#505050" stroke="#ddd" stroke-width="1"><circle cx="2" cy="2" r="1.4"/><circle cx="12" cy="2" r="1.4"/><circle cx="7" cy="12" r="1.4"/></g></svg><div class="a blue" style="left:1779px;top:968px;width:59px;height:18px"></div><div class="a" style="left:1798.5px;top:968px;width:1px;height:18px;background:#3a5f96"></div><div class="a" style="left:1818.5px;top:968px;width:1px;height:18px;background:#3a5f96"></div><svg width="14" height="14" viewBox="0 0 14 14" style="left:1782px;top:970px"><g fill="none" stroke="#eee" stroke-width="1"><rect x="1" y="2" width="2.5" height="2.5"/><rect x="1" y="10.5" width="2.5" height="2.5"/><rect x="10.5" y="10.5" width="2.5" height="2.5"/><path d="M2.25 4.5 V10.5 M3.5 11.75 H10.5 M3.5 3.25 H8.5 M11.75 6 V10.5"/></g><rect x="9.5" y="1" width="4" height="4" fill="#fff"/></svg><svg width="14" height="14" viewBox="0 0 14 14" style="left:1802px;top:970px"><rect x="1.5" y="2" width="11" height="7.5" fill="none" stroke="#eee" stroke-width="1.3"/><path d="M7 9.5 V12 M4 12.5 H10" stroke="#eee" stroke-width="1.2"/></svg><svg width="14" height="14" viewBox="0 0 14 14" style="left:1822px;top:970px"><path d="M0.5 3.5 H4 L5 1.8 H9 L10 3.5 H13.5 V12.5 H0.5 Z" fill="#eee"/><circle cx="7" cy="7.8" r="3" fill="#4772b3"/><circle cx="7" cy="7.8" r="1.6" fill="#eee"/></svg><div class="a" style="left:1838px;top:968px;width:19px;height:18px;background:#262626;border-radius:0 3px 3px 0"></div><svg width="10" height="6" style="left:1843px;top:974.0px" viewBox="0 0 10 6"><path d="M1 1 L5 5 L9 1" fill="none" stroke="#ddd" stroke-width="1.1"/></svg><svg width="12" height="12" viewBox="0 0 12 12" style="left:1863px;top:971px"><path d="M2 2 L10 10 M10 2 L2 10" stroke="#ddd" stroke-width="1.2"/></svg><svg width="12" height="6" style="left:1888px;top:975px" viewBox="0 0 12 6"><g fill="#777"><rect x="0" y="0" width="1.2" height="1.2"/><rect x="3.5" y="0" width="1.2" height="1.2"/><rect x="7" y="0" width="1.2" height="1.2"/><rect x="10.5" y="0" width="1.2" height="1.2"/><rect x="0" y="3.5" width="1.2" height="1.2"/><rect x="3.5" y="3.5" width="1.2" height="1.2"/><rect x="7" y="3.5" width="1.2" height="1.2"/><rect x="10.5" y="3.5" width="1.2" height="1.2"/></g></svg><div class="a" style="left:1578px;top:983px;width:335px;height:22px;background:#181818"></div><svg width="16" height="16" viewBox="0 0 16 16" style="left:1853px;top:987px"><circle cx="7.5" cy="7.5" r="6.3" fill="none" stroke="#bbb" stroke-width="1"/><ellipse cx="7.5" cy="7.5" rx="2.8" ry="6.3" fill="none" stroke="#bbb" stroke-width="0.9"/><path d="M1.5 5.5 H13.5 M1.5 9.5 H13.5" stroke="#bbb" stroke-width="0.9"/></svg>
<div class="t" style="left:1866px;top:992px;font-size:9px;color:#bbb">1</div>
<div class="a" style="left:1875px;top:988px;width:1px;height:13px;background:#555"></div>
<div class="t" style="left:1880px;top:988px;color:#bbb">5.0.0</div>
</body></html>
